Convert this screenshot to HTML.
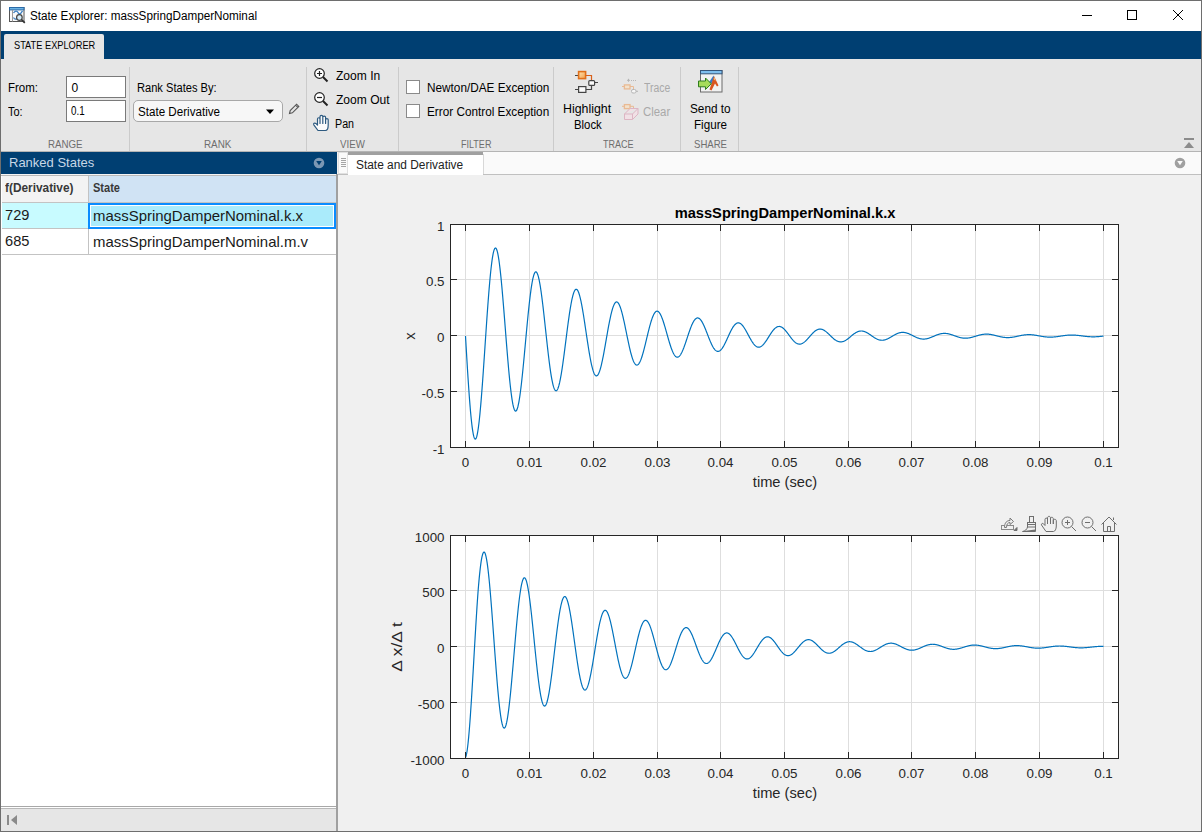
<!DOCTYPE html><html><head><meta charset="utf-8"><style>
html,body{margin:0;padding:0;width:1202px;height:832px;overflow:hidden;background:#f0f0f0;}
body{position:relative;font-family:"Liberation Sans",sans-serif;}
div{position:absolute;}
.t{white-space:nowrap;transform-origin:0 0;}
</style></head><body>
<div style="left:0px;top:0px;width:1202px;height:832px;background:#f0f0f0;"></div>
<div style="left:0px;top:0px;width:1202px;height:31px;background:#fff;"></div>
<div style="left:0px;top:31px;width:1202px;height:28px;background:#003f72;"></div>
<div style="left:4px;top:34px;width:100px;height:25px;background:#e6e6e6;border-radius:2px 2px 0 0;"></div>
<div class="t" style="left:14.1px;top:40.09px;font-size:11px;line-height:11px;color:#000;transform:scaleX(0.8400);">STATE EXPLORER</div>
<div style="left:0px;top:59px;width:1202px;height:92px;background:#e6e6e6;"></div>
<div style="left:0px;top:151px;width:1202px;height:1px;background:#b4b4b4;"></div>
<div style="left:129px;top:67px;width:1px;height:84px;background:#cbcbcb;"></div>
<div style="left:306px;top:67px;width:1px;height:84px;background:#cbcbcb;"></div>
<div style="left:398px;top:67px;width:1px;height:84px;background:#cbcbcb;"></div>
<div style="left:553px;top:67px;width:1px;height:84px;background:#cbcbcb;"></div>
<div style="left:680px;top:67px;width:1px;height:84px;background:#cbcbcb;"></div>
<div style="left:738px;top:67px;width:1px;height:84px;background:#cbcbcb;"></div>
<div class="t" style="left:30.0px;top:10.24px;font-size:12px;line-height:12px;color:#000;transform:scaleX(0.9752);">State Explorer: massSpringDamperNominal</div>
<div class="t" style="left:7.64px;top:81.88px;font-size:12px;line-height:12px;color:#000;transform:scaleX(0.9578);">From:</div>
<div class="t" style="left:7.64px;top:105.66px;font-size:12px;line-height:12px;color:#000;transform:scaleX(0.9151);">To:</div>
<div style="left:66px;top:76px;width:60px;height:22px;background:#fff;border:1px solid #7a7a7a;box-sizing:border-box;"></div>
<div style="left:66px;top:100px;width:60px;height:22px;background:#fff;border:1px solid #7a7a7a;box-sizing:border-box;"></div>
<div class="t" style="left:71.5px;top:82.04px;font-size:12px;line-height:12px;color:#000;">0</div>
<div class="t" style="left:71.1px;top:105.44px;font-size:12px;line-height:12px;color:#000;transform:scaleX(0.8154);">0.1</div>
<div class="t" style="left:48.0px;top:139.43px;font-size:11px;line-height:11px;color:#6e6e6e;transform:scaleX(0.8846);">RANGE</div>
<div class="t" style="left:137.0px;top:82.46px;font-size:12px;line-height:12px;color:#000;transform:scaleX(0.9252);">Rank States By:</div>
<div style="left:133px;top:100px;width:150px;height:22px;background:#f7f7f7;border:1px solid #a8a8a8;box-sizing:border-box;border-radius:5px;"></div>
<div class="t" style="left:138.1px;top:105.54px;font-size:12px;line-height:12px;color:#000;transform:scaleX(0.9681);">State Derivative</div>
<svg style="position:absolute;left:265px;top:108px" width="10" height="7"><path d="M1 1.5 L9 1.5 L5 6 Z" fill="#000"/></svg>
<svg style="position:absolute;left:287px;top:102px" width="14" height="14"><path d="M2.5 11.5 L3.2 8.6 L9.6 2.2 L11.8 4.4 L5.4 10.8 Z M8.6 3.2 L10.8 5.4" fill="none" stroke="#555" stroke-width="1.1"/></svg>
<div class="t" style="left:204.35999999999999px;top:139.19px;font-size:11px;line-height:11px;color:#6e6e6e;transform:scaleX(0.8966);">RANK</div>
<svg style="position:absolute;left:313px;top:67px" width="16" height="16"><circle cx="6.5" cy="6.5" r="4.8" fill="#fff" stroke="#222" stroke-width="1.2"/><path d="M4 6.5 H9 M6.5 4 V9" stroke="#222" stroke-width="1.2"/><path d="M10 10 L14.5 14.5" stroke="#222" stroke-width="2"/></svg>
<svg style="position:absolute;left:313px;top:91px" width="16" height="16"><circle cx="6.5" cy="6.5" r="4.8" fill="#fff" stroke="#222" stroke-width="1.2"/><path d="M4 6.5 H9" stroke="#222" stroke-width="1.2"/><path d="M10 10 L14.5 14.5" stroke="#222" stroke-width="2"/></svg>
<svg style="position:absolute;left:312px;top:114px" width="18" height="18"><path d="M6 16.5 L1.8 10.8 C1.1 9.6 2.6 8.5 3.8 9.4 L5.5 11 V5 C5.5 3.3 8 3.3 8 5 V9.5 V2.8 C8 1 10.8 1 10.8 2.8 V9.5 V3.3 C10.8 1.6 13.6 1.6 13.6 3.3 V9.5 V5.8 C13.6 4.2 16.2 4.2 16.2 5.8 V11 C16.2 14 15 16.5 13.5 16.5 Z" fill="#fbfbfb" stroke="#2d5a80" stroke-width="1.2" stroke-linejoin="round"/></svg>
<div class="t" style="left:335.54px;top:69.90px;font-size:12px;line-height:12px;color:#000;transform:scaleX(1.0042);">Zoom In</div>
<div class="t" style="left:335.54px;top:93.74px;font-size:12px;line-height:12px;color:#000;transform:scaleX(1.0047);">Zoom Out</div>
<div class="t" style="left:335.1px;top:118.34px;font-size:12px;line-height:12px;color:#000;transform:scaleX(0.8905);">Pan</div>
<div class="t" style="left:340.0px;top:139.09px;font-size:11px;line-height:11px;color:#6e6e6e;transform:scaleX(0.8822);">VIEW</div>
<div style="left:406px;top:80px;width:14px;height:14px;background:#fff;border:1px solid #8a8a8a;box-sizing:border-box;"></div>
<div style="left:406px;top:104px;width:14px;height:14px;background:#fff;border:1px solid #8a8a8a;box-sizing:border-box;"></div>
<div class="t" style="left:427.28000000000003px;top:82.00px;font-size:12px;line-height:12px;color:#000;transform:scaleX(0.9813);">Newton/DAE Exception</div>
<div class="t" style="left:427.28000000000003px;top:105.64px;font-size:12px;line-height:12px;color:#000;transform:scaleX(0.9798);">Error Control Exception</div>
<div class="t" style="left:461.35999999999996px;top:139.09px;font-size:11px;line-height:11px;color:#6e6e6e;transform:scaleX(0.8199);">FILTER</div>
<svg style="position:absolute;left:570px;top:66px" width="32" height="32">
<defs><linearGradient id="og" x1="0" y1="0" x2="1" y2="1"><stop offset="0" stop-color="#fde3b0"/><stop offset="1" stop-color="#f4a04a"/></linearGradient></defs>
<path d="M5 9.5 H8.5 M5 23.5 H8.5 M24.6 16.5 H28" stroke="#444" stroke-width="1.2"/>
<rect x="8.6" y="5.6" width="7" height="7" fill="url(#og)" stroke="#e0701a" stroke-width="1.6"/>
<path d="M15.6 9.5 H21.5 V14.5" stroke="#d8601a" stroke-width="1.2" fill="none"/>
<path d="M21.5 19.3 V23.5 H15.8" stroke="#444" stroke-width="1.2" fill="none"/>
<rect x="18.8" y="14.6" width="5.8" height="4.8" rx="1" fill="#fafafa" stroke="#444" stroke-width="1.2"/>
<rect x="8.6" y="20.6" width="7.3" height="5.8" fill="#fafafa" stroke="#444" stroke-width="1.2"/>
</svg>
<div class="t" style="left:563.0px;top:103.22px;font-size:12px;line-height:12px;color:#000;transform:scaleX(1.0323);">Highlight</div>
<div class="t" style="left:573.54px;top:119.16px;font-size:12px;line-height:12px;color:#000;transform:scaleX(0.9474);">Block</div>
<svg style="position:absolute;left:618px;top:74px" width="24" height="48" opacity="0.8">
<path d="M10.5 4.8 V7.8 M9 6.3 H12" stroke="#aaa" stroke-width="1"/>
<path d="M13 6.5 h1 M15 6.5 h1 M17 6.5 h1" stroke="#aaa" stroke-width="1"/>
<path d="M4 12.5 H6.3 M12 12.5 H15.5 V15.5" stroke="#eab080" stroke-width="1" fill="none"/>
<rect x="6.4" y="10.9" width="5.6" height="4" fill="#f6e2c8" stroke="#eab080" stroke-width="1.3"/>
<rect x="13.5" y="15.5" width="4.5" height="3.5" rx="1.5" fill="#fafafa" stroke="#aaa" stroke-width="1"/>
<path d="M18 17.3 H20" stroke="#aaa" stroke-width="1"/>
<path d="M4 32.3 H6.3 M12 32.3 H15.5 V34.5" stroke="#eab080" stroke-width="1" fill="none"/>
<rect x="6.4" y="30.6" width="5.6" height="4" fill="#f6e2c8" stroke="#eab080" stroke-width="1.3"/>
<path d="M6.5 40 L12 34.5 H20 V40 L14.5 45.5 H6.5 Z M6.5 40 H14.5 L20 34.5 M14.5 40 V45.5" fill="#f4e0e6" stroke="#dcaabb" stroke-width="1"/>
</svg>
<div class="t" style="left:644.1px;top:82.48px;font-size:12px;line-height:12px;color:#a9a9a9;transform:scaleX(0.8667);">Trace</div>
<div class="t" style="left:643.3px;top:105.86px;font-size:12px;line-height:12px;color:#a9a9a9;transform:scaleX(0.9502);">Clear</div>
<div class="t" style="left:602.7199999999999px;top:139.09px;font-size:11px;line-height:11px;color:#6e6e6e;transform:scaleX(0.8208);">TRACE</div>
<svg style="position:absolute;left:694px;top:66px" width="32" height="32">
<rect x="6.5" y="4.5" width="21.5" height="21.5" fill="#f2f2f2" stroke="#6b6b6b" stroke-width="1"/>
<rect x="6.5" y="4.5" width="21.5" height="3.3" fill="#7fbfee" stroke="#35557a" stroke-width="1"/>
<path d="M14.5 17 L19.5 9.5 L20.5 12.5 L16.5 19 Z" fill="#3a7cc8"/>
<path d="M15.5 23.5 L20 10 L24.5 19.5 L23 20.5 L21 17.5 L17.5 24.5 Z" fill="#d9561e"/>
<path d="M19.5 13 L20.5 11 L21.5 15 Z" fill="#f8c080"/>
<path d="M4.5 15 H11.5 V12 L17.3 17.8 L11.5 23.5 V20.8 H4.5 Z" fill="#a6dc5a" stroke="#2e7d1e" stroke-width="1"/>
</svg>
<div class="t" style="left:689.7199999999999px;top:103.22px;font-size:12px;line-height:12px;color:#000;transform:scaleX(0.9815);">Send to</div>
<div class="t" style="left:693.7199999999999px;top:119.16px;font-size:12px;line-height:12px;color:#000;transform:scaleX(0.9704);">Figure</div>
<div class="t" style="left:693.7199999999999px;top:139.09px;font-size:11px;line-height:11px;color:#6e6e6e;transform:scaleX(0.8709);">SHARE</div>
<div style="left:1184px;top:138px;width:10px;height:2px;background:#8c8c8c;"></div>
<svg style="position:absolute;left:1183px;top:141px" width="12" height="8"><path d="M1 7 L6 1 L11 7 Z" fill="#8c8c8c"/></svg>
<div style="left:1px;top:152px;width:336px;height:22px;background:#003f72;"></div>
<div class="t" style="left:8.92px;top:155.78px;font-size:13px;line-height:13px;color:#c7d7e6;transform:scaleX(0.9992);">Ranked States</div>
<svg style="position:absolute;left:313px;top:157px" width="12" height="12"><circle cx="6" cy="6" r="5.3" fill="#7b97b3"/><path d="M3.2 4 H8.8 L6 8.3 Z" fill="#003f72"/></svg>
<div style="left:1px;top:174px;width:336px;height:658px;background:#fff;"></div>
<div style="left:1px;top:174px;width:336px;height:1px;background:#f4f4f4;"></div>
<div style="left:1px;top:175px;width:336px;height:1px;background:#b9b9b9;"></div>
<div style="left:2px;top:176px;width:86px;height:26px;background:#f3f3f3;"></div>
<div style="left:89px;top:176px;width:247px;height:26px;background:#d0e3f4;"></div>
<div style="left:88px;top:176px;width:1px;height:79px;background:#c3c3c3;"></div>
<div style="left:2px;top:202px;width:334px;height:1px;background:#c3c3c3;"></div>
<div style="left:2px;top:203px;width:86px;height:25px;background:#c8fbff;"></div>
<div style="left:88px;top:203px;width:248px;height:26px;background:#0a8cff;"></div>
<div style="left:90px;top:205px;width:244px;height:22px;background:#fff;"></div>
<div style="left:91px;top:206px;width:242px;height:20px;background:#aaebfb;"></div>
<div style="left:2px;top:228px;width:86px;height:1px;background:#c3c3c3;"></div>
<div style="left:2px;top:254px;width:334px;height:1px;background:#c3c3c3;"></div>
<div class="t" style="left:5.45px;top:182.30px;font-size:12px;line-height:12px;color:#383838;font-weight:bold;transform:scaleX(0.9876);">f(Derivative)</div>
<div class="t" style="left:93.27999999999999px;top:182.30px;font-size:12px;line-height:12px;color:#383838;font-weight:bold;transform:scaleX(0.9201);">State</div>
<div class="t" style="left:5.1px;top:207.67px;font-size:14.5px;line-height:14.5px;color:#1a1a1a;transform:scaleX(1.0086);">729</div>
<div class="t" style="left:92.53999999999999px;top:208.71px;font-size:14.5px;line-height:14.5px;color:#1a1a1a;transform:scaleX(1.0301);">massSpringDamperNominal.k.x</div>
<div class="t" style="left:5.1px;top:233.81px;font-size:14.5px;line-height:14.5px;color:#1a1a1a;transform:scaleX(1.0086);">685</div>
<div class="t" style="left:92.53999999999999px;top:234.61px;font-size:14.5px;line-height:14.5px;color:#1a1a1a;transform:scaleX(1.0302);">massSpringDamperNominal.m.v</div>
<div style="left:336px;top:174px;width:2px;height:657px;background:#a0a0a0;"></div>
<div style="left:1px;top:806px;width:335px;height:1px;background:#a8a8a8;"></div>
<div style="left:1px;top:808px;width:335px;height:1px;background:#b9b9b9;"></div>
<div style="left:1px;top:809px;width:335px;height:22px;background:#e6e6e6;"></div>
<div style="left:7px;top:815px;width:2px;height:10px;background:#8a8a8a;"></div>
<svg style="position:absolute;left:10px;top:814px" width="8" height="12"><path d="M7 1 L1 6 L7 11 Z" fill="#8a8a8a"/></svg>
<div style="left:338px;top:152px;width:863px;height:22px;background:#fafafa;"></div>
<div style="left:338px;top:174px;width:863px;height:1px;background:#c0c0c0;"></div>
<div style="left:338px;top:175px;width:863px;height:656px;background:#f0f0f0;"></div>
<div style="left:338px;top:152px;width:10px;height:22px;background:#fafafa;border:1px solid #e0e0e0;box-sizing:border-box;"></div>
<div style="left:341px;top:158px;width:5px;height:1px;background:#a5a5a5;"></div>
<div style="left:341px;top:160px;width:5px;height:1px;background:#a5a5a5;"></div>
<div style="left:341px;top:162px;width:5px;height:1px;background:#a5a5a5;"></div>
<div style="left:341px;top:164px;width:5px;height:1px;background:#a5a5a5;"></div>
<div style="left:341px;top:166px;width:5px;height:1px;background:#a5a5a5;"></div>
<div style="left:348px;top:152px;width:135px;height:23px;background:#fff;"></div>
<div style="left:348px;top:152px;width:135px;height:3px;background:#a0a0a0;"></div>
<div style="left:483px;top:154px;width:1px;height:20px;background:#d8d8d8;"></div>
<div class="t" style="left:356.1px;top:159.02px;font-size:12px;line-height:12px;color:#222;transform:scaleX(0.9920);">State and Derivative</div>
<svg style="position:absolute;left:1174px;top:157px" width="12" height="12"><circle cx="6" cy="6" r="5.3" fill="#a0a0a0"/><path d="M3.2 4 H8.8 L6 8.3 Z" fill="#fafafa"/></svg>
<div style="left:1082px;top:15px;width:10px;height:1px;background:#000;"></div>
<div style="left:1127px;top:10px;width:10px;height:10px;border:1px solid #000;box-sizing:border-box;"></div>
<svg style="position:absolute;left:1172px;top:9px" width="12" height="12"><path d="M1 1 L11 11 M11 1 L1 11" stroke="#000" stroke-width="1"/></svg>
<svg style="position:absolute;left:6px;top:4px" width="22" height="22">
<rect x="3.5" y="3.5" width="14.5" height="14" fill="#fafafa" stroke="#555" stroke-width="1"/>
<rect x="3.5" y="3.5" width="14.5" height="2.4" fill="#6cb4e4" stroke="#2a6aa8" stroke-width="1"/>
<path d="M6.5 6 V17.5" stroke="#999" stroke-width="1"/>
<path d="M7.5 9 C9 6.5 11 6.5 12 8.5 S14 11 16.5 6.8" stroke="#3c7fc0" fill="none" stroke-width="1.3"/>
<path d="M7.5 13.5 C8.5 15.5 10 15.5 11 14.5" stroke="#3c7fc0" fill="none" stroke-width="1.3"/>
<circle cx="13.4" cy="13.5" r="2.8" fill="#d6ecf8" stroke="#444" stroke-width="1.2"/>
<path d="M15.5 15.6 L18.8 18.8" stroke="#333" stroke-width="1.7"/>
</svg>
<div style="left:0px;top:0px;width:1202px;height:832px;border:1px solid #6e6e6e;box-sizing:border-box;background:transparent;"></div>
<svg style="position:absolute;left:0;top:0" width="1202" height="832" font-family="'Liberation Sans', sans-serif"><rect x="450" y="224" width="669" height="224" fill="#fff"/><line x1="465.5" y1="225" x2="465.5" y2="447" stroke="#dedede" stroke-width="1"/><line x1="529.5" y1="225" x2="529.5" y2="447" stroke="#dedede" stroke-width="1"/><line x1="593.5" y1="225" x2="593.5" y2="447" stroke="#dedede" stroke-width="1"/><line x1="657.5" y1="225" x2="657.5" y2="447" stroke="#dedede" stroke-width="1"/><line x1="720.5" y1="225" x2="720.5" y2="447" stroke="#dedede" stroke-width="1"/><line x1="784.5" y1="225" x2="784.5" y2="447" stroke="#dedede" stroke-width="1"/><line x1="848.5" y1="225" x2="848.5" y2="447" stroke="#dedede" stroke-width="1"/><line x1="911.5" y1="225" x2="911.5" y2="447" stroke="#dedede" stroke-width="1"/><line x1="975.5" y1="225" x2="975.5" y2="447" stroke="#dedede" stroke-width="1"/><line x1="1039.5" y1="225" x2="1039.5" y2="447" stroke="#dedede" stroke-width="1"/><line x1="1103.5" y1="225" x2="1103.5" y2="447" stroke="#dedede" stroke-width="1"/><line x1="451" y1="224.5" x2="1118" y2="224.5" stroke="#dedede" stroke-width="1"/><line x1="451" y1="279.5" x2="1118" y2="279.5" stroke="#dedede" stroke-width="1"/><line x1="451" y1="335.5" x2="1118" y2="335.5" stroke="#dedede" stroke-width="1"/><line x1="451" y1="391.5" x2="1118" y2="391.5" stroke="#dedede" stroke-width="1"/><line x1="451" y1="447.5" x2="1118" y2="447.5" stroke="#dedede" stroke-width="1"/><path d="M465.50 336.00 L465.82 341.52 L466.14 346.99 L466.46 352.41 L466.78 357.76 L467.10 363.03 L467.41 368.21 L467.73 373.29 L468.05 378.24 L468.37 383.07 L468.69 387.76 L469.01 392.30 L469.33 396.68 L469.65 400.88 L469.97 404.91 L470.29 408.74 L470.60 412.38 L470.92 415.81 L471.24 419.03 L471.56 422.03 L471.88 424.80 L472.20 427.34 L472.52 429.64 L472.84 431.70 L473.16 433.51 L473.48 435.08 L473.79 436.39 L474.11 437.45 L474.43 438.25 L474.75 438.80 L475.07 439.09 L475.39 439.13 L475.71 438.91 L476.03 438.44 L476.35 437.73 L476.67 436.76 L476.98 435.55 L477.30 434.10 L477.62 432.42 L477.94 430.51 L478.26 428.37 L478.58 426.02 L478.90 423.46 L479.22 420.70 L479.54 417.74 L479.86 414.60 L480.17 411.27 L480.49 407.78 L480.81 404.13 L481.13 400.33 L481.45 396.39 L481.77 392.32 L482.09 388.13 L482.41 383.84 L482.73 379.45 L483.05 374.97 L483.36 370.42 L483.68 365.81 L484.00 361.14 L484.32 356.44 L484.64 351.71 L484.96 346.97 L485.28 342.22 L485.60 337.49 L485.92 332.77 L486.24 328.08 L486.55 323.44 L486.87 318.85 L487.19 314.32 L487.51 309.87 L487.83 305.51 L488.15 301.24 L488.47 297.08 L488.79 293.04 L489.11 289.13 L489.43 285.34 L489.74 281.71 L490.06 278.22 L490.38 274.89 L490.70 271.73 L491.02 268.75 L491.34 265.95 L491.66 263.33 L491.98 260.90 L492.30 258.67 L492.62 256.64 L492.93 254.82 L493.25 253.21 L493.57 251.81 L493.89 250.62 L494.21 249.65 L494.53 248.90 L494.85 248.37 L495.17 248.05 L495.49 247.95 L495.81 248.07 L496.12 248.41 L496.44 248.96 L496.76 249.72 L497.08 250.69 L497.40 251.87 L497.72 253.24 L498.04 254.82 L498.36 256.58 L498.68 258.54 L499.00 260.67 L499.31 262.98 L499.63 265.46 L499.95 268.10 L500.27 270.89 L500.59 273.83 L500.91 276.91 L501.23 280.12 L501.55 283.45 L501.87 286.89 L502.19 290.44 L502.50 294.08 L502.82 297.81 L503.14 301.61 L503.46 305.48 L503.78 309.40 L504.10 313.37 L504.42 317.38 L504.74 321.41 L505.06 325.46 L505.38 329.51 L505.69 333.56 L506.01 337.59 L506.33 341.61 L506.65 345.58 L506.97 349.52 L507.29 353.40 L507.61 357.22 L507.93 360.96 L508.25 364.63 L508.56 368.21 L508.88 371.69 L509.20 375.07 L509.52 378.33 L509.84 381.47 L510.16 384.49 L510.48 387.37 L510.80 390.11 L511.12 392.70 L511.44 395.14 L511.75 397.42 L512.07 399.54 L512.39 401.49 L512.71 403.27 L513.03 404.88 L513.35 406.30 L513.67 407.55 L513.99 408.62 L514.31 409.50 L514.63 410.19 L514.95 410.70 L515.26 411.02 L515.58 411.16 L515.90 411.11 L516.22 410.87 L516.54 410.46 L516.86 409.86 L517.18 409.08 L517.50 408.12 L517.82 407.00 L518.13 405.70 L518.45 404.24 L518.77 402.61 L519.09 400.83 L519.41 398.90 L519.73 396.83 L520.05 394.61 L520.37 392.26 L520.69 389.79 L521.01 387.19 L521.33 384.48 L521.64 381.67 L521.96 378.75 L522.28 375.75 L522.60 372.66 L522.92 369.50 L523.24 366.27 L523.56 362.98 L523.88 359.64 L524.20 356.26 L524.51 352.85 L524.83 349.41 L525.15 345.96 L525.47 342.50 L525.79 339.04 L526.11 335.59 L526.43 332.16 L526.75 328.75 L527.07 325.38 L527.39 322.06 L527.71 318.78 L528.02 315.56 L528.34 312.41 L528.66 309.34 L528.98 306.34 L529.30 303.43 L529.62 300.62 L529.94 297.91 L530.26 295.30 L530.58 292.81 L530.89 290.44 L531.21 288.19 L531.53 286.07 L531.85 284.09 L532.17 282.24 L532.49 280.54 L532.81 278.98 L533.13 277.56 L533.45 276.30 L533.77 275.19 L534.09 274.24 L534.40 273.45 L534.72 272.81 L535.04 272.33 L535.36 272.01 L535.68 271.85 L536.00 271.85 L536.32 272.01 L536.64 272.32 L536.96 272.79 L537.27 273.42 L537.59 274.19 L537.91 275.11 L538.23 276.18 L538.55 277.39 L538.87 278.74 L539.19 280.22 L539.51 281.84 L539.83 283.58 L540.15 285.44 L540.47 287.41 L540.78 289.49 L541.10 291.68 L541.42 293.97 L541.74 296.35 L542.06 298.81 L542.38 301.36 L542.70 303.98 L543.02 306.66 L543.34 309.40 L543.65 312.20 L543.97 315.03 L544.29 317.91 L544.61 320.82 L544.93 323.75 L545.25 326.69 L545.57 329.64 L545.89 332.60 L546.21 335.54 L546.53 338.48 L546.85 341.39 L547.16 344.28 L547.48 347.13 L547.80 349.94 L548.12 352.70 L548.44 355.40 L548.76 358.05 L549.08 360.63 L549.40 363.13 L549.72 365.55 L550.03 367.89 L550.35 370.14 L550.67 372.29 L550.99 374.35 L551.31 376.30 L551.63 378.13 L551.95 379.86 L552.27 381.47 L552.59 382.96 L552.91 384.33 L553.23 385.57 L553.54 386.68 L553.86 387.66 L554.18 388.51 L554.50 389.23 L554.82 389.81 L555.14 390.25 L555.46 390.56 L555.78 390.74 L556.10 390.78 L556.41 390.68 L556.73 390.45 L557.05 390.08 L557.37 389.59 L557.69 388.96 L558.01 388.21 L558.33 387.33 L558.65 386.33 L558.97 385.21 L559.29 383.98 L559.61 382.63 L559.92 381.18 L560.24 379.62 L560.56 377.96 L560.88 376.21 L561.20 374.36 L561.52 372.43 L561.84 370.42 L562.16 368.34 L562.48 366.19 L562.80 363.97 L563.11 361.69 L563.43 359.37 L563.75 356.99 L564.07 354.58 L564.39 352.13 L564.71 349.66 L565.03 347.17 L565.35 344.66 L565.67 342.14 L565.99 339.61 L566.30 337.10 L566.62 334.59 L566.94 332.10 L567.26 329.63 L567.58 327.18 L567.90 324.78 L568.22 322.41 L568.54 320.08 L568.86 317.81 L569.17 315.60 L569.49 313.44 L569.81 311.35 L570.13 309.34 L570.45 307.39 L570.77 305.53 L571.09 303.76 L571.41 302.07 L571.73 300.47 L572.05 298.97 L572.37 297.57 L572.68 296.27 L573.00 295.07 L573.32 293.98 L573.64 293.00 L573.96 292.13 L574.28 291.37 L574.60 290.73 L574.92 290.20 L575.24 289.78 L575.56 289.49 L575.87 289.30 L576.19 289.24 L576.51 289.29 L576.83 289.45 L577.15 289.73 L577.47 290.12 L577.79 290.62 L578.11 291.23 L578.43 291.95 L578.75 292.77 L579.06 293.70 L579.38 294.73 L579.70 295.85 L580.02 297.06 L580.34 298.37 L580.66 299.76 L580.98 301.23 L581.30 302.78 L581.62 304.41 L581.94 306.10 L582.25 307.86 L582.57 309.68 L582.89 311.56 L583.21 313.49 L583.53 315.46 L583.85 317.47 L584.17 319.52 L584.49 321.60 L584.81 323.71 L585.12 325.83 L585.44 327.97 L585.76 330.12 L586.08 332.27 L586.40 334.42 L586.72 336.56 L587.04 338.69 L587.36 340.81 L587.68 342.90 L588.00 344.96 L588.32 346.99 L588.63 348.99 L588.95 350.94 L589.27 352.85 L589.59 354.70 L589.91 356.50 L590.23 358.24 L590.55 359.92 L590.87 361.53 L591.19 363.07 L591.50 364.53 L591.82 365.92 L592.14 367.22 L592.46 368.45 L592.78 369.58 L593.10 370.63 L593.42 371.59 L593.74 372.46 L594.06 373.23 L594.38 373.91 L594.69 374.49 L595.01 374.97 L595.33 375.35 L595.65 375.64 L595.97 375.82 L596.29 375.91 L596.61 375.90 L596.93 375.79 L597.25 375.58 L597.57 375.28 L597.88 374.88 L598.20 374.39 L598.52 373.80 L598.84 373.13 L599.16 372.37 L599.48 371.52 L599.80 370.59 L600.12 369.58 L600.44 368.49 L600.76 367.33 L601.08 366.09 L601.39 364.79 L601.71 363.42 L602.03 361.99 L602.35 360.51 L602.67 358.97 L602.99 357.39 L603.31 355.76 L603.63 354.09 L603.95 352.38 L604.26 350.64 L604.58 348.87 L604.90 347.08 L605.22 345.28 L605.54 343.46 L605.86 341.63 L606.18 339.79 L606.50 337.96 L606.82 336.12 L607.14 334.30 L607.46 332.49 L607.77 330.70 L608.09 328.93 L608.41 327.19 L608.73 325.48 L609.05 323.80 L609.37 322.16 L609.69 320.56 L610.01 319.01 L610.33 317.51 L610.64 316.06 L610.96 314.67 L611.28 313.33 L611.60 312.06 L611.92 310.86 L612.24 309.72 L612.56 308.65 L612.88 307.66 L613.20 306.74 L613.52 305.89 L613.84 305.13 L614.15 304.44 L614.47 303.84 L614.79 303.31 L615.11 302.87 L615.43 302.52 L615.75 302.24 L616.07 302.06 L616.39 301.95 L616.71 301.93 L617.02 302.00 L617.34 302.14 L617.66 302.37 L617.98 302.69 L618.30 303.08 L618.62 303.55 L618.94 304.10 L619.26 304.72 L619.58 305.42 L619.90 306.19 L620.22 307.03 L620.53 307.93 L620.85 308.90 L621.17 309.93 L621.49 311.02 L621.81 312.17 L622.13 313.37 L622.45 314.62 L622.77 315.91 L623.09 317.25 L623.40 318.63 L623.72 320.04 L624.04 321.49 L624.36 322.96 L624.68 324.46 L625.00 325.98 L625.32 327.51 L625.64 329.06 L625.96 330.62 L626.28 332.19 L626.60 333.75 L626.91 335.31 L627.23 336.87 L627.55 338.42 L627.87 339.95 L628.19 341.47 L628.51 342.96 L628.83 344.43 L629.15 345.88 L629.47 347.29 L629.79 348.66 L630.10 350.00 L630.42 351.30 L630.74 352.55 L631.06 353.76 L631.38 354.92 L631.70 356.02 L632.02 357.07 L632.34 358.06 L632.66 359.00 L632.98 359.87 L633.29 360.68 L633.61 361.42 L633.93 362.10 L634.25 362.71 L634.57 363.26 L634.89 363.73 L635.21 364.13 L635.53 364.47 L635.85 364.73 L636.16 364.91 L636.48 365.03 L636.80 365.08 L637.12 365.05 L637.44 364.95 L637.76 364.78 L638.08 364.55 L638.40 364.24 L638.72 363.86 L639.04 363.42 L639.36 362.92 L639.67 362.35 L639.99 361.71 L640.31 361.02 L640.63 360.27 L640.95 359.47 L641.27 358.61 L641.59 357.70 L641.91 356.74 L642.23 355.74 L642.55 354.69 L642.86 353.60 L643.18 352.47 L643.50 351.31 L643.82 350.12 L644.14 348.90 L644.46 347.65 L644.78 346.38 L645.10 345.10 L645.42 343.79 L645.74 342.47 L646.05 341.15 L646.37 339.82 L646.69 338.48 L647.01 337.15 L647.33 335.82 L647.65 334.49 L647.97 333.18 L648.29 331.88 L648.61 330.60 L648.92 329.34 L649.24 328.10 L649.56 326.88 L649.88 325.69 L650.20 324.54 L650.52 323.42 L650.84 322.33 L651.16 321.29 L651.48 320.28 L651.80 319.32 L652.12 318.41 L652.43 317.54 L652.75 316.72 L653.07 315.95 L653.39 315.24 L653.71 314.58 L654.03 313.97 L654.35 313.43 L654.67 312.94 L654.99 312.51 L655.31 312.14 L655.62 311.83 L655.94 311.58 L656.26 311.39 L656.58 311.26 L656.90 311.20 L657.22 311.19 L657.54 311.25 L657.86 311.37 L658.18 311.54 L658.50 311.78 L658.81 312.07 L659.13 312.42 L659.45 312.83 L659.77 313.29 L660.09 313.80 L660.41 314.37 L660.73 314.98 L661.05 315.65 L661.37 316.36 L661.69 317.12 L662.00 317.91 L662.32 318.75 L662.64 319.63 L662.96 320.54 L663.28 321.49 L663.60 322.46 L663.92 323.47 L664.24 324.50 L664.56 325.55 L664.88 326.62 L665.19 327.71 L665.51 328.82 L665.83 329.93 L666.15 331.06 L666.47 332.19 L666.79 333.33 L667.11 334.47 L667.43 335.61 L667.75 336.74 L668.07 337.86 L668.38 338.97 L668.70 340.07 L669.02 341.16 L669.34 342.23 L669.66 343.27 L669.98 344.30 L670.30 345.29 L670.62 346.26 L670.94 347.20 L671.25 348.11 L671.57 348.99 L671.89 349.82 L672.21 350.62 L672.53 351.39 L672.85 352.10 L673.17 352.78 L673.49 353.41 L673.81 354.00 L674.13 354.54 L674.45 355.03 L674.76 355.47 L675.08 355.86 L675.40 356.20 L675.72 356.49 L676.04 356.73 L676.36 356.92 L676.68 357.05 L677.00 357.14 L677.32 357.17 L677.63 357.15 L677.95 357.07 L678.27 356.95 L678.59 356.78 L678.91 356.55 L679.23 356.28 L679.55 355.96 L679.87 355.59 L680.19 355.18 L680.51 354.72 L680.83 354.21 L681.14 353.67 L681.46 353.08 L681.78 352.46 L682.10 351.80 L682.42 351.10 L682.74 350.37 L683.06 349.61 L683.38 348.82 L683.70 348.01 L684.01 347.16 L684.33 346.30 L684.65 345.41 L684.97 344.51 L685.29 343.58 L685.61 342.65 L685.93 341.70 L686.25 340.75 L686.57 339.78 L686.89 338.82 L687.21 337.85 L687.52 336.88 L687.84 335.91 L688.16 334.95 L688.48 334.00 L688.80 333.05 L689.12 332.12 L689.44 331.20 L689.76 330.30 L690.08 329.42 L690.39 328.55 L690.71 327.71 L691.03 326.90 L691.35 326.11 L691.67 325.35 L691.99 324.61 L692.31 323.91 L692.63 323.25 L692.95 322.61 L693.27 322.02 L693.59 321.46 L693.90 320.94 L694.22 320.45 L694.54 320.01 L694.86 319.61 L695.18 319.25 L695.50 318.93 L695.82 318.66 L696.14 318.43 L696.46 318.25 L696.78 318.10 L697.09 318.01 L697.41 317.95 L697.73 317.95 L698.05 317.98 L698.37 318.06 L698.69 318.18 L699.01 318.35 L699.33 318.56 L699.65 318.80 L699.97 319.09 L700.28 319.42 L700.60 319.79 L700.92 320.20 L701.24 320.64 L701.56 321.12 L701.88 321.63 L702.20 322.17 L702.52 322.75 L702.84 323.35 L703.15 323.98 L703.47 324.64 L703.79 325.32 L704.11 326.03 L704.43 326.75 L704.75 327.49 L705.07 328.26 L705.39 329.03 L705.71 329.82 L706.03 330.62 L706.35 331.43 L706.66 332.25 L706.98 333.07 L707.30 333.89 L707.62 334.72 L707.94 335.55 L708.26 336.37 L708.58 337.18 L708.90 337.99 L709.22 338.79 L709.53 339.58 L709.85 340.36 L710.17 341.12 L710.49 341.87 L710.81 342.60 L711.13 343.31 L711.45 343.99 L711.77 344.66 L712.09 345.30 L712.41 345.91 L712.73 346.50 L713.04 347.06 L713.36 347.59 L713.68 348.09 L714.00 348.55 L714.32 348.99 L714.64 349.39 L714.96 349.75 L715.28 350.08 L715.60 350.38 L715.91 350.63 L716.23 350.85 L716.55 351.04 L716.87 351.18 L717.19 351.29 L717.51 351.36 L717.83 351.40 L718.15 351.39 L718.47 351.35 L718.79 351.27 L719.11 351.16 L719.42 351.00 L719.74 350.82 L720.06 350.59 L720.38 350.34 L720.70 350.05 L721.02 349.72 L721.34 349.37 L721.66 348.98 L721.98 348.57 L722.30 348.13 L722.61 347.66 L722.93 347.16 L723.25 346.64 L723.57 346.09 L723.89 345.53 L724.21 344.94 L724.53 344.34 L724.85 343.71 L725.17 343.08 L725.49 342.42 L725.80 341.76 L726.12 341.08 L726.44 340.40 L726.76 339.71 L727.08 339.01 L727.40 338.31 L727.72 337.61 L728.04 336.91 L728.36 336.21 L728.67 335.51 L728.99 334.81 L729.31 334.13 L729.63 333.45 L729.95 332.78 L730.27 332.12 L730.59 331.47 L730.91 330.84 L731.23 330.22 L731.55 329.63 L731.87 329.05 L732.18 328.48 L732.50 327.94 L732.82 327.43 L733.14 326.93 L733.46 326.46 L733.78 326.02 L734.10 325.60 L734.42 325.21 L734.74 324.85 L735.06 324.51 L735.37 324.21 L735.69 323.94 L736.01 323.69 L736.33 323.48 L736.65 323.30 L736.97 323.15 L737.29 323.03 L737.61 322.95 L737.93 322.89 L738.25 322.87 L738.56 322.88 L738.88 322.92 L739.20 323.00 L739.52 323.10 L739.84 323.24 L740.16 323.40 L740.48 323.60 L740.80 323.82 L741.12 324.08 L741.43 324.36 L741.75 324.66 L742.07 325.00 L742.39 325.35 L742.71 325.73 L743.03 326.14 L743.35 326.57 L743.67 327.01 L743.99 327.48 L744.31 327.96 L744.62 328.47 L744.94 328.98 L745.26 329.52 L745.58 330.06 L745.90 330.62 L746.22 331.18 L746.54 331.76 L746.86 332.34 L747.18 332.93 L747.50 333.52 L747.82 334.12 L748.13 334.72 L748.45 335.32 L748.77 335.91 L749.09 336.51 L749.41 337.10 L749.73 337.68 L750.05 338.26 L750.37 338.83 L750.69 339.39 L751.01 339.93 L751.32 340.47 L751.64 340.99 L751.96 341.50 L752.28 341.99 L752.60 342.47 L752.92 342.92 L753.24 343.36 L753.56 343.78 L753.88 344.18 L754.20 344.55 L754.51 344.90 L754.83 345.23 L755.15 345.54 L755.47 345.82 L755.79 346.08 L756.11 346.31 L756.43 346.51 L756.75 346.69 L757.07 346.84 L757.38 346.96 L757.70 347.06 L758.02 347.13 L758.34 347.17 L758.66 347.19 L758.98 347.18 L759.30 347.14 L759.62 347.08 L759.94 346.98 L760.26 346.87 L760.58 346.72 L760.89 346.56 L761.21 346.36 L761.53 346.15 L761.85 345.91 L762.17 345.64 L762.49 345.36 L762.81 345.05 L763.13 344.73 L763.45 344.38 L763.76 344.02 L764.08 343.64 L764.40 343.24 L764.72 342.82 L765.04 342.40 L765.36 341.96 L765.68 341.50 L766.00 341.04 L766.32 340.56 L766.64 340.08 L766.95 339.59 L767.27 339.10 L767.59 338.59 L767.91 338.09 L768.23 337.58 L768.55 337.07 L768.87 336.57 L769.19 336.06 L769.51 335.55 L769.83 335.05 L770.14 334.56 L770.46 334.06 L770.78 333.58 L771.10 333.11 L771.42 332.64 L771.74 332.18 L772.06 331.74 L772.38 331.31 L772.70 330.89 L773.02 330.49 L773.34 330.10 L773.65 329.73 L773.97 329.37 L774.29 329.03 L774.61 328.71 L774.93 328.41 L775.25 328.13 L775.57 327.87 L775.89 327.63 L776.21 327.42 L776.53 327.22 L776.84 327.05 L777.16 326.89 L777.48 326.77 L777.80 326.66 L778.12 326.58 L778.44 326.52 L778.76 326.48 L779.08 326.47 L779.40 326.47 L779.72 326.51 L780.03 326.56 L780.35 326.64 L780.67 326.74 L780.99 326.86 L781.31 327.00 L781.63 327.16 L781.95 327.35 L782.27 327.55 L782.59 327.77 L782.90 328.01 L783.22 328.27 L783.54 328.55 L783.86 328.84 L784.18 329.15 L784.50 329.47 L784.82 329.81 L785.14 330.16 L785.46 330.52 L785.78 330.90 L786.10 331.28 L786.41 331.68 L786.73 332.08 L787.05 332.49 L787.37 332.90 L787.69 333.32 L788.01 333.75 L788.33 334.18 L788.65 334.61 L788.97 335.04 L789.29 335.48 L789.60 335.91 L789.92 336.34 L790.24 336.76 L790.56 337.19 L790.88 337.60 L791.20 338.01 L791.52 338.42 L791.84 338.82 L792.16 339.20 L792.48 339.58 L792.79 339.95 L793.11 340.31 L793.43 340.65 L793.75 340.99 L794.07 341.30 L794.39 341.61 L794.71 341.90 L795.03 342.17 L795.35 342.43 L795.66 342.67 L795.98 342.89 L796.30 343.10 L796.62 343.28 L796.94 343.45 L797.26 343.61 L797.58 343.74 L797.90 343.85 L798.22 343.94 L798.54 344.02 L798.86 344.07 L799.17 344.11 L799.49 344.12 L799.81 344.12 L800.13 344.09 L800.45 344.05 L800.77 343.99 L801.09 343.91 L801.41 343.81 L801.73 343.69 L802.05 343.56 L802.36 343.40 L802.68 343.23 L803.00 343.05 L803.32 342.85 L803.64 342.63 L803.96 342.40 L804.28 342.15 L804.60 341.89 L804.92 341.62 L805.24 341.33 L805.55 341.04 L805.87 340.73 L806.19 340.42 L806.51 340.09 L806.83 339.76 L807.15 339.42 L807.47 339.07 L807.79 338.72 L808.11 338.36 L808.42 338.00 L808.74 337.64 L809.06 337.27 L809.38 336.90 L809.70 336.54 L810.02 336.17 L810.34 335.80 L810.66 335.44 L810.98 335.08 L811.30 334.73 L811.62 334.37 L811.93 334.03 L812.25 333.69 L812.57 333.36 L812.89 333.03 L813.21 332.72 L813.53 332.41 L813.85 332.12 L814.17 331.83 L814.49 331.56 L814.81 331.30 L815.12 331.05 L815.44 330.81 L815.76 330.59 L816.08 330.38 L816.40 330.19 L816.72 330.01 L817.04 329.84 L817.36 329.69 L817.68 329.56 L818.00 329.44 L818.31 329.34 L818.63 329.26 L818.95 329.19 L819.27 329.14 L819.59 329.11 L819.91 329.09 L820.23 329.09 L820.55 329.10 L820.87 329.13 L821.18 329.18 L821.50 329.24 L821.82 329.32 L822.14 329.42 L822.46 329.53 L822.78 329.65 L823.10 329.79 L823.42 329.94 L823.74 330.11 L824.06 330.29 L824.38 330.48 L824.69 330.69 L825.01 330.90 L825.33 331.13 L825.65 331.37 L825.97 331.62 L826.29 331.87 L826.61 332.14 L826.93 332.41 L827.25 332.69 L827.57 332.98 L827.88 333.27 L828.20 333.57 L828.52 333.87 L828.84 334.18 L829.16 334.48 L829.48 334.79 L829.80 335.11 L830.12 335.42 L830.44 335.73 L830.75 336.04 L831.07 336.35 L831.39 336.66 L831.71 336.96 L832.03 337.26 L832.35 337.56 L832.67 337.85 L832.99 338.13 L833.31 338.41 L833.63 338.68 L833.94 338.94 L834.26 339.20 L834.58 339.44 L834.90 339.68 L835.22 339.91 L835.54 340.12 L835.86 340.33 L836.18 340.52 L836.50 340.70 L836.82 340.88 L837.13 341.03 L837.45 341.18 L837.77 341.31 L838.09 341.43 L838.41 341.54 L838.73 341.63 L839.05 341.70 L839.37 341.77 L839.69 341.82 L840.01 341.86 L840.33 341.88 L840.64 341.89 L840.96 341.88 L841.28 341.86 L841.60 341.83 L841.92 341.78 L842.24 341.72 L842.56 341.64 L842.88 341.56 L843.20 341.46 L843.52 341.35 L843.83 341.22 L844.15 341.09 L844.47 340.94 L844.79 340.78 L845.11 340.61 L845.43 340.43 L845.75 340.25 L846.07 340.05 L846.39 339.84 L846.71 339.63 L847.02 339.41 L847.34 339.18 L847.66 338.94 L847.98 338.70 L848.30 338.46 L848.62 338.21 L848.94 337.95 L849.26 337.70 L849.58 337.44 L849.89 337.17 L850.21 336.91 L850.53 336.65 L850.85 336.38 L851.17 336.12 L851.49 335.85 L851.81 335.59 L852.13 335.33 L852.45 335.08 L852.77 334.82 L853.09 334.57 L853.40 334.33 L853.72 334.09 L854.04 333.86 L854.36 333.63 L854.68 333.41 L855.00 333.20 L855.32 332.99 L855.64 332.79 L855.96 332.60 L856.28 332.42 L856.59 332.25 L856.91 332.09 L857.23 331.94 L857.55 331.80 L857.87 331.67 L858.19 331.55 L858.51 331.44 L858.83 331.35 L859.15 331.26 L859.47 331.19 L859.78 331.13 L860.10 331.08 L860.42 331.04 L860.74 331.01 L861.06 331.00 L861.38 330.99 L861.70 331.00 L862.02 331.02 L862.34 331.06 L862.65 331.10 L862.97 331.15 L863.29 331.22 L863.61 331.30 L863.93 331.39 L864.25 331.48 L864.57 331.59 L864.89 331.71 L865.21 331.84 L865.53 331.97 L865.85 332.12 L866.16 332.27 L866.48 332.44 L866.80 332.61 L867.12 332.78 L867.44 332.97 L867.76 333.16 L868.08 333.35 L868.40 333.55 L868.72 333.76 L869.04 333.97 L869.35 334.18 L869.67 334.40 L869.99 334.61 L870.31 334.84 L870.63 335.06 L870.95 335.28 L871.27 335.51 L871.59 335.73 L871.91 335.96 L872.23 336.18 L872.54 336.40 L872.86 336.62 L873.18 336.84 L873.50 337.05 L873.82 337.26 L874.14 337.47 L874.46 337.67 L874.78 337.87 L875.10 338.06 L875.41 338.24 L875.73 338.42 L876.05 338.59 L876.37 338.76 L876.69 338.92 L877.01 339.07 L877.33 339.21 L877.65 339.35 L877.97 339.47 L878.29 339.59 L878.61 339.70 L878.92 339.80 L879.24 339.89 L879.56 339.97 L879.88 340.04 L880.20 340.10 L880.52 340.15 L880.84 340.19 L881.16 340.22 L881.48 340.25 L881.80 340.26 L882.11 340.26 L882.43 340.25 L882.75 340.23 L883.07 340.20 L883.39 340.16 L883.71 340.11 L884.03 340.06 L884.35 339.99 L884.67 339.91 L884.99 339.83 L885.30 339.74 L885.62 339.64 L885.94 339.53 L886.26 339.41 L886.58 339.28 L886.90 339.15 L887.22 339.02 L887.54 338.87 L887.86 338.72 L888.17 338.57 L888.49 338.40 L888.81 338.24 L889.13 338.07 L889.45 337.89 L889.77 337.72 L890.09 337.53 L890.41 337.35 L890.73 337.17 L891.05 336.98 L891.37 336.79 L891.68 336.60 L892.00 336.41 L892.32 336.22 L892.64 336.03 L892.96 335.84 L893.28 335.65 L893.60 335.47 L893.92 335.28 L894.24 335.10 L894.56 334.92 L894.87 334.75 L895.19 334.58 L895.51 334.41 L895.83 334.25 L896.15 334.09 L896.47 333.94 L896.79 333.79 L897.11 333.65 L897.43 333.52 L897.75 333.39 L898.06 333.27 L898.38 333.15 L898.70 333.05 L899.02 332.95 L899.34 332.86 L899.66 332.77 L899.98 332.70 L900.30 332.63 L900.62 332.57 L900.94 332.52 L901.25 332.47 L901.57 332.44 L901.89 332.41 L902.21 332.39 L902.53 332.38 L902.85 332.38 L903.17 332.39 L903.49 332.40 L903.81 332.43 L904.12 332.46 L904.44 332.50 L904.76 332.55 L905.08 332.61 L905.40 332.67 L905.72 332.74 L906.04 332.82 L906.36 332.90 L906.68 332.99 L907.00 333.09 L907.32 333.20 L907.63 333.31 L907.95 333.42 L908.27 333.55 L908.59 333.67 L908.91 333.80 L909.23 333.94 L909.55 334.08 L909.87 334.22 L910.19 334.37 L910.51 334.52 L910.82 334.67 L911.14 334.83 L911.46 334.99 L911.78 335.15 L912.10 335.31 L912.42 335.47 L912.74 335.63 L913.06 335.79 L913.38 335.95 L913.70 336.11 L914.01 336.27 L914.33 336.43 L914.65 336.58 L914.97 336.74 L915.29 336.89 L915.61 337.04 L915.93 337.18 L916.25 337.32 L916.57 337.46 L916.88 337.59 L917.20 337.72 L917.52 337.85 L917.84 337.97 L918.16 338.08 L918.48 338.19 L918.80 338.30 L919.12 338.40 L919.44 338.49 L919.76 338.57 L920.08 338.65 L920.39 338.73 L920.71 338.79 L921.03 338.85 L921.35 338.90 L921.67 338.95 L921.99 338.99 L922.31 339.02 L922.63 339.04 L922.95 339.06 L923.27 339.07 L923.58 339.07 L923.90 339.07 L924.22 339.06 L924.54 339.04 L924.86 339.01 L925.18 338.98 L925.50 338.94 L925.82 338.90 L926.14 338.85 L926.46 338.79 L926.77 338.72 L927.09 338.65 L927.41 338.58 L927.73 338.50 L928.05 338.41 L928.37 338.32 L928.69 338.22 L929.01 338.12 L929.33 338.01 L929.64 337.90 L929.96 337.79 L930.28 337.67 L930.60 337.55 L930.92 337.43 L931.24 337.30 L931.56 337.17 L931.88 337.04 L932.20 336.91 L932.52 336.78 L932.84 336.64 L933.15 336.50 L933.47 336.37 L933.79 336.23 L934.11 336.10 L934.43 335.96 L934.75 335.82 L935.07 335.69 L935.39 335.56 L935.71 335.43 L936.03 335.30 L936.34 335.17 L936.66 335.05 L936.98 334.93 L937.30 334.81 L937.62 334.69 L937.94 334.58 L938.26 334.48 L938.58 334.37 L938.90 334.27 L939.22 334.18 L939.53 334.09 L939.85 334.00 L940.17 333.92 L940.49 333.85 L940.81 333.78 L941.13 333.71 L941.45 333.66 L941.77 333.60 L942.09 333.55 L942.40 333.51 L942.72 333.48 L943.04 333.45 L943.36 333.43 L943.68 333.41 L944.00 333.40 L944.32 333.39 L944.64 333.39 L944.96 333.40 L945.28 333.41 L945.60 333.43 L945.91 333.45 L946.23 333.48 L946.55 333.52 L946.87 333.56 L947.19 333.61 L947.51 333.66 L947.83 333.71 L948.15 333.78 L948.47 333.84 L948.78 333.91 L949.10 333.99 L949.42 334.07 L949.74 334.15 L950.06 334.24 L950.38 334.33 L950.70 334.43 L951.02 334.52 L951.34 334.62 L951.66 334.73 L951.97 334.83 L952.29 334.94 L952.61 335.05 L952.93 335.16 L953.25 335.27 L953.57 335.39 L953.89 335.50 L954.21 335.62 L954.53 335.73 L954.85 335.85 L955.16 335.96 L955.48 336.08 L955.80 336.19 L956.12 336.30 L956.44 336.41 L956.76 336.52 L957.08 336.63 L957.40 336.74 L957.72 336.84 L958.04 336.95 L958.36 337.04 L958.67 337.14 L958.99 337.23 L959.31 337.32 L959.63 337.41 L959.95 337.49 L960.27 337.57 L960.59 337.65 L960.91 337.72 L961.23 337.78 L961.55 337.84 L961.86 337.90 L962.18 337.95 L962.50 338.00 L962.82 338.05 L963.14 338.08 L963.46 338.12 L963.78 338.15 L964.10 338.17 L964.42 338.19 L964.74 338.20 L965.05 338.21 L965.37 338.21 L965.69 338.21 L966.01 338.21 L966.33 338.19 L966.65 338.18 L966.97 338.16 L967.29 338.13 L967.61 338.10 L967.92 338.06 L968.24 338.02 L968.56 337.98 L968.88 337.93 L969.20 337.88 L969.52 337.82 L969.84 337.76 L970.16 337.69 L970.48 337.62 L970.80 337.55 L971.12 337.48 L971.43 337.40 L971.75 337.32 L972.07 337.24 L972.39 337.15 L972.71 337.07 L973.03 336.98 L973.35 336.88 L973.67 336.79 L973.99 336.70 L974.31 336.60 L974.62 336.51 L974.94 336.41 L975.26 336.31 L975.58 336.22 L975.90 336.12 L976.22 336.02 L976.54 335.92 L976.86 335.83 L977.18 335.73 L977.50 335.64 L977.81 335.55 L978.13 335.45 L978.45 335.36 L978.77 335.28 L979.09 335.19 L979.41 335.11 L979.73 335.03 L980.05 334.95 L980.37 334.87 L980.69 334.80 L981.00 334.73 L981.32 334.66 L981.64 334.60 L981.96 334.54 L982.28 334.49 L982.60 334.43 L982.92 334.39 L983.24 334.34 L983.56 334.30 L983.88 334.26 L984.19 334.23 L984.51 334.20 L984.83 334.18 L985.15 334.16 L985.47 334.14 L985.79 334.13 L986.11 334.13 L986.43 334.12 L986.75 334.12 L987.07 334.13 L987.38 334.14 L987.70 334.15 L988.02 334.17 L988.34 334.19 L988.66 334.22 L988.98 334.25 L989.30 334.28 L989.62 334.32 L989.94 334.36 L990.25 334.41 L990.57 334.46 L990.89 334.51 L991.21 334.56 L991.53 334.62 L991.85 334.68 L992.17 334.74 L992.49 334.81 L992.81 334.87 L993.13 334.94 L993.45 335.02 L993.76 335.09 L994.08 335.16 L994.40 335.24 L994.72 335.32 L995.04 335.40 L995.36 335.48 L995.68 335.56 L996.00 335.64 L996.32 335.72 L996.63 335.81 L996.95 335.89 L997.27 335.97 L997.59 336.05 L997.91 336.13 L998.23 336.21 L998.55 336.29 L998.87 336.37 L999.19 336.45 L999.51 336.52 L999.83 336.60 L1000.14 336.67 L1000.46 336.74 L1000.78 336.81 L1001.10 336.88 L1001.42 336.94 L1001.74 337.00 L1002.06 337.06 L1002.38 337.12 L1002.70 337.17 L1003.01 337.22 L1003.33 337.27 L1003.65 337.32 L1003.97 337.36 L1004.29 337.40 L1004.61 337.43 L1004.93 337.46 L1005.25 337.49 L1005.57 337.52 L1005.89 337.54 L1006.21 337.56 L1006.52 337.57 L1006.84 337.58 L1007.16 337.59 L1007.48 337.59 L1007.80 337.59 L1008.12 337.59 L1008.44 337.58 L1008.76 337.57 L1009.08 337.55 L1009.40 337.54 L1009.71 337.52 L1010.03 337.49 L1010.35 337.46 L1010.67 337.43 L1010.99 337.40 L1011.31 337.36 L1011.63 337.32 L1011.95 337.28 L1012.27 337.24 L1012.59 337.19 L1012.90 337.14 L1013.22 337.09 L1013.54 337.03 L1013.86 336.98 L1014.18 336.92 L1014.50 336.86 L1014.82 336.80 L1015.14 336.73 L1015.46 336.67 L1015.78 336.60 L1016.09 336.54 L1016.41 336.47 L1016.73 336.40 L1017.05 336.33 L1017.37 336.26 L1017.69 336.19 L1018.01 336.13 L1018.33 336.06 L1018.65 335.99 L1018.97 335.92 L1019.28 335.85 L1019.60 335.78 L1019.92 335.72 L1020.24 335.65 L1020.56 335.59 L1020.88 335.52 L1021.20 335.46 L1021.52 335.40 L1021.84 335.34 L1022.16 335.28 L1022.47 335.23 L1022.79 335.18 L1023.11 335.13 L1023.43 335.08 L1023.75 335.03 L1024.07 334.99 L1024.39 334.94 L1024.71 334.90 L1025.03 334.87 L1025.35 334.83 L1025.66 334.80 L1025.98 334.78 L1026.30 334.75 L1026.62 334.73 L1026.94 334.71 L1027.26 334.69 L1027.58 334.68 L1027.90 334.67 L1028.22 334.66 L1028.54 334.65 L1028.85 334.65 L1029.17 334.65 L1029.49 334.66 L1029.81 334.67 L1030.13 334.68 L1030.45 334.69 L1030.77 334.71 L1031.09 334.72 L1031.41 334.75 L1031.72 334.77 L1032.04 334.80 L1032.36 334.83 L1032.68 334.86 L1033.00 334.89 L1033.32 334.93 L1033.64 334.97 L1033.96 335.01 L1034.28 335.05 L1034.60 335.10 L1034.91 335.14 L1035.23 335.19 L1035.55 335.24 L1035.87 335.29 L1036.19 335.34 L1036.51 335.40 L1036.83 335.45 L1037.15 335.51 L1037.47 335.56 L1037.79 335.62 L1038.11 335.68 L1038.42 335.73 L1038.74 335.79 L1039.06 335.85 L1039.38 335.91 L1039.70 335.97 L1040.02 336.03 L1040.34 336.08 L1040.66 336.14 L1040.98 336.20 L1041.30 336.25 L1041.61 336.31 L1041.93 336.36 L1042.25 336.42 L1042.57 336.47 L1042.89 336.52 L1043.21 336.57 L1043.53 336.62 L1043.85 336.66 L1044.17 336.71 L1044.49 336.75 L1044.80 336.79 L1045.12 336.83 L1045.44 336.86 L1045.76 336.90 L1046.08 336.93 L1046.40 336.96 L1046.72 336.99 L1047.04 337.02 L1047.36 337.04 L1047.67 337.06 L1047.99 337.08 L1048.31 337.10 L1048.63 337.11 L1048.95 337.12 L1049.27 337.13 L1049.59 337.13 L1049.91 337.14 L1050.23 337.14 L1050.55 337.14 L1050.87 337.13 L1051.18 337.13 L1051.50 337.12 L1051.82 337.11 L1052.14 337.09 L1052.46 337.08 L1052.78 337.06 L1053.10 337.04 L1053.42 337.02 L1053.74 336.99 L1054.05 336.96 L1054.37 336.94 L1054.69 336.90 L1055.01 336.87 L1055.33 336.84 L1055.65 336.80 L1055.97 336.76 L1056.29 336.73 L1056.61 336.69 L1056.93 336.64 L1057.24 336.60 L1057.56 336.56 L1057.88 336.51 L1058.20 336.47 L1058.52 336.42 L1058.84 336.37 L1059.16 336.32 L1059.48 336.28 L1059.80 336.23 L1060.12 336.18 L1060.43 336.13 L1060.75 336.08 L1061.07 336.03 L1061.39 335.98 L1061.71 335.93 L1062.03 335.88 L1062.35 335.84 L1062.67 335.79 L1062.99 335.74 L1063.31 335.70 L1063.62 335.65 L1063.94 335.61 L1064.26 335.57 L1064.58 335.53 L1064.90 335.48 L1065.22 335.45 L1065.54 335.41 L1065.86 335.37 L1066.18 335.34 L1066.50 335.30 L1066.82 335.27 L1067.13 335.24 L1067.45 335.22 L1067.77 335.19 L1068.09 335.17 L1068.41 335.14 L1068.73 335.12 L1069.05 335.11 L1069.37 335.09 L1069.69 335.08 L1070.01 335.06 L1070.32 335.06 L1070.64 335.05 L1070.96 335.04 L1071.28 335.04 L1071.60 335.04 L1071.92 335.04 L1072.24 335.04 L1072.56 335.05 L1072.88 335.05 L1073.20 335.06 L1073.51 335.07 L1073.83 335.09 L1074.15 335.10 L1074.47 335.12 L1074.79 335.14 L1075.11 335.16 L1075.43 335.18 L1075.75 335.20 L1076.07 335.23 L1076.38 335.25 L1076.70 335.28 L1077.02 335.31 L1077.34 335.34 L1077.66 335.38 L1077.98 335.41 L1078.30 335.44 L1078.62 335.48 L1078.94 335.52 L1079.26 335.55 L1079.58 335.59 L1079.89 335.63 L1080.21 335.67 L1080.53 335.71 L1080.85 335.75 L1081.17 335.79 L1081.49 335.83 L1081.81 335.87 L1082.13 335.92 L1082.45 335.96 L1082.76 336.00 L1083.08 336.04 L1083.40 336.08 L1083.72 336.12 L1084.04 336.16 L1084.36 336.20 L1084.68 336.24 L1085.00 336.28 L1085.32 336.31 L1085.64 336.35 L1085.95 336.39 L1086.27 336.42 L1086.59 336.45 L1086.91 336.48 L1087.23 336.52 L1087.55 336.55 L1087.87 336.57 L1088.19 336.60 L1088.51 336.63 L1088.83 336.65 L1089.14 336.67 L1089.46 336.69 L1089.78 336.71 L1090.10 336.73 L1090.42 336.75 L1090.74 336.76 L1091.06 336.77 L1091.38 336.78 L1091.70 336.79 L1092.02 336.80 L1092.34 336.81 L1092.65 336.81 L1092.97 336.81 L1093.29 336.81 L1093.61 336.81 L1093.93 336.81 L1094.25 336.80 L1094.57 336.80 L1094.89 336.79 L1095.21 336.78 L1095.53 336.77 L1095.84 336.75 L1096.16 336.74 L1096.48 336.72 L1096.80 336.71 L1097.12 336.69 L1097.44 336.67 L1097.76 336.64 L1098.08 336.62 L1098.40 336.60 L1098.72 336.57 L1099.03 336.55 L1099.35 336.52 L1099.67 336.49 L1099.99 336.46 L1100.31 336.43 L1100.63 336.40 L1100.95 336.37 L1101.27 336.33 L1101.59 336.30 L1101.91 336.27 L1102.22 336.23 L1102.54 336.20 L1102.86 336.17 L1103.18 336.13 L1103.50 336.10" fill="none" stroke="#0072bd" stroke-width="1.2" stroke-linejoin="round"/><rect x="450.5" y="224.5" width="668" height="223" fill="none" stroke="#262626" stroke-width="1"/><line x1="465.5" y1="447" x2="465.5" y2="441" stroke="#262626"/><line x1="465.5" y1="225" x2="465.5" y2="231" stroke="#262626"/><text x="465.5" y="466.5" text-anchor="middle" font-size="13.33" fill="#262626">0</text><line x1="529.5" y1="447" x2="529.5" y2="441" stroke="#262626"/><line x1="529.5" y1="225" x2="529.5" y2="231" stroke="#262626"/><text x="529.5" y="466.5" text-anchor="middle" font-size="13.33" fill="#262626">0.01</text><line x1="593.5" y1="447" x2="593.5" y2="441" stroke="#262626"/><line x1="593.5" y1="225" x2="593.5" y2="231" stroke="#262626"/><text x="593.5" y="466.5" text-anchor="middle" font-size="13.33" fill="#262626">0.02</text><line x1="657.5" y1="447" x2="657.5" y2="441" stroke="#262626"/><line x1="657.5" y1="225" x2="657.5" y2="231" stroke="#262626"/><text x="657.5" y="466.5" text-anchor="middle" font-size="13.33" fill="#262626">0.03</text><line x1="720.5" y1="447" x2="720.5" y2="441" stroke="#262626"/><line x1="720.5" y1="225" x2="720.5" y2="231" stroke="#262626"/><text x="720.5" y="466.5" text-anchor="middle" font-size="13.33" fill="#262626">0.04</text><line x1="784.5" y1="447" x2="784.5" y2="441" stroke="#262626"/><line x1="784.5" y1="225" x2="784.5" y2="231" stroke="#262626"/><text x="784.5" y="466.5" text-anchor="middle" font-size="13.33" fill="#262626">0.05</text><line x1="848.5" y1="447" x2="848.5" y2="441" stroke="#262626"/><line x1="848.5" y1="225" x2="848.5" y2="231" stroke="#262626"/><text x="848.5" y="466.5" text-anchor="middle" font-size="13.33" fill="#262626">0.06</text><line x1="911.5" y1="447" x2="911.5" y2="441" stroke="#262626"/><line x1="911.5" y1="225" x2="911.5" y2="231" stroke="#262626"/><text x="911.5" y="466.5" text-anchor="middle" font-size="13.33" fill="#262626">0.07</text><line x1="975.5" y1="447" x2="975.5" y2="441" stroke="#262626"/><line x1="975.5" y1="225" x2="975.5" y2="231" stroke="#262626"/><text x="975.5" y="466.5" text-anchor="middle" font-size="13.33" fill="#262626">0.08</text><line x1="1039.5" y1="447" x2="1039.5" y2="441" stroke="#262626"/><line x1="1039.5" y1="225" x2="1039.5" y2="231" stroke="#262626"/><text x="1039.5" y="466.5" text-anchor="middle" font-size="13.33" fill="#262626">0.09</text><line x1="1103.5" y1="447" x2="1103.5" y2="441" stroke="#262626"/><line x1="1103.5" y1="225" x2="1103.5" y2="231" stroke="#262626"/><text x="1103.5" y="466.5" text-anchor="middle" font-size="13.33" fill="#262626">0.1</text><line x1="451" y1="224.5" x2="457" y2="224.5" stroke="#262626"/><line x1="1118" y1="224.5" x2="1112" y2="224.5" stroke="#262626"/><text x="444.5" y="231.0" text-anchor="end" font-size="13.33" fill="#262626">1</text><line x1="451" y1="279.5" x2="457" y2="279.5" stroke="#262626"/><line x1="1118" y1="279.5" x2="1112" y2="279.5" stroke="#262626"/><text x="444.5" y="286.0" text-anchor="end" font-size="13.33" fill="#262626">0.5</text><line x1="451" y1="335.5" x2="457" y2="335.5" stroke="#262626"/><line x1="1118" y1="335.5" x2="1112" y2="335.5" stroke="#262626"/><text x="444.5" y="342.0" text-anchor="end" font-size="13.33" fill="#262626">0</text><line x1="451" y1="391.5" x2="457" y2="391.5" stroke="#262626"/><line x1="1118" y1="391.5" x2="1112" y2="391.5" stroke="#262626"/><text x="444.5" y="398.0" text-anchor="end" font-size="13.33" fill="#262626">-0.5</text><line x1="451" y1="447.5" x2="457" y2="447.5" stroke="#262626"/><line x1="1118" y1="447.5" x2="1112" y2="447.5" stroke="#262626"/><text x="444.5" y="454.0" text-anchor="end" font-size="13.33" fill="#262626">-1</text><text x="785" y="486.8" text-anchor="middle" font-size="14.67" fill="#262626">time (sec)</text><text x="414.5" y="336.0" text-anchor="middle" font-size="14.67" fill="#262626" transform="rotate(-90 414.5 336.0)" >x</text><text x="785" y="217.9" text-anchor="middle" font-size="14.67" font-weight="bold" fill="#000">massSpringDamperNominal.k.x</text><rect x="450" y="535" width="669" height="224" fill="#fff"/><line x1="465.5" y1="536" x2="465.5" y2="758" stroke="#dedede" stroke-width="1"/><line x1="529.5" y1="536" x2="529.5" y2="758" stroke="#dedede" stroke-width="1"/><line x1="593.5" y1="536" x2="593.5" y2="758" stroke="#dedede" stroke-width="1"/><line x1="657.5" y1="536" x2="657.5" y2="758" stroke="#dedede" stroke-width="1"/><line x1="720.5" y1="536" x2="720.5" y2="758" stroke="#dedede" stroke-width="1"/><line x1="784.5" y1="536" x2="784.5" y2="758" stroke="#dedede" stroke-width="1"/><line x1="848.5" y1="536" x2="848.5" y2="758" stroke="#dedede" stroke-width="1"/><line x1="911.5" y1="536" x2="911.5" y2="758" stroke="#dedede" stroke-width="1"/><line x1="975.5" y1="536" x2="975.5" y2="758" stroke="#dedede" stroke-width="1"/><line x1="1039.5" y1="536" x2="1039.5" y2="758" stroke="#dedede" stroke-width="1"/><line x1="1103.5" y1="536" x2="1103.5" y2="758" stroke="#dedede" stroke-width="1"/><line x1="451" y1="535.5" x2="1118" y2="535.5" stroke="#dedede" stroke-width="1"/><line x1="451" y1="590.5" x2="1118" y2="590.5" stroke="#dedede" stroke-width="1"/><line x1="451" y1="646.5" x2="1118" y2="646.5" stroke="#dedede" stroke-width="1"/><line x1="451" y1="702.5" x2="1118" y2="702.5" stroke="#dedede" stroke-width="1"/><line x1="451" y1="758.5" x2="1118" y2="758.5" stroke="#dedede" stroke-width="1"/><path d="M465.50 757.62 L465.82 756.87 L466.14 755.80 L466.46 754.43 L466.78 752.76 L467.10 750.80 L467.41 748.54 L467.73 746.01 L468.05 743.21 L468.37 740.14 L468.69 736.83 L469.01 733.27 L469.33 729.49 L469.65 725.49 L469.97 721.28 L470.29 716.89 L470.60 712.32 L470.92 707.58 L471.24 702.70 L471.56 697.68 L471.88 692.55 L472.20 687.31 L472.52 681.98 L472.84 676.58 L473.16 671.13 L473.48 665.63 L473.79 660.12 L474.11 654.59 L474.43 649.07 L474.75 643.58 L475.07 638.12 L475.39 632.72 L475.71 627.39 L476.03 622.14 L476.35 617.00 L476.67 611.96 L476.98 607.06 L477.30 602.30 L477.62 597.69 L477.94 593.24 L478.26 588.98 L478.58 585.19 L478.90 581.58 L479.22 578.15 L479.54 574.91 L479.86 571.86 L480.17 569.01 L480.49 566.36 L480.81 563.93 L481.13 561.71 L481.45 559.72 L481.77 557.95 L482.09 556.40 L482.41 555.09 L482.73 554.01 L483.05 553.17 L483.36 552.56 L483.68 552.19 L484.00 552.05 L484.32 552.15 L484.64 552.48 L484.96 553.04 L485.28 553.82 L485.60 554.84 L485.92 556.08 L486.24 557.53 L486.55 559.20 L486.87 561.07 L487.19 563.15 L487.51 565.43 L487.83 567.89 L488.15 570.54 L488.47 573.36 L488.79 576.35 L489.11 579.49 L489.43 582.79 L489.74 586.23 L490.06 589.81 L490.38 593.50 L490.70 597.31 L491.02 601.22 L491.34 605.23 L491.66 609.32 L491.98 613.48 L492.30 617.70 L492.62 621.98 L492.93 626.29 L493.25 630.64 L493.57 635.00 L493.89 639.37 L494.21 643.74 L494.53 648.10 L494.85 652.43 L495.17 656.72 L495.49 660.97 L495.81 665.17 L496.12 669.29 L496.44 673.35 L496.76 677.32 L497.08 681.19 L497.40 684.96 L497.72 688.62 L498.04 692.16 L498.36 695.56 L498.68 698.84 L499.00 701.96 L499.31 704.94 L499.63 707.76 L499.95 710.42 L500.27 712.90 L500.59 715.21 L500.91 717.34 L501.23 719.29 L501.55 721.05 L501.87 722.62 L502.19 724.00 L502.50 725.17 L502.82 726.15 L503.14 726.93 L503.46 727.51 L503.78 727.89 L504.10 728.07 L504.42 728.04 L504.74 727.82 L505.06 727.40 L505.38 726.78 L505.69 725.97 L506.01 724.97 L506.33 723.78 L506.65 722.40 L506.97 720.85 L507.29 719.13 L507.61 717.23 L507.93 715.17 L508.25 712.96 L508.56 710.59 L508.88 708.08 L509.20 705.43 L509.52 702.65 L509.84 699.74 L510.16 696.72 L510.48 693.59 L510.80 690.37 L511.12 687.05 L511.44 683.65 L511.75 680.17 L512.07 676.64 L512.39 673.04 L512.71 669.40 L513.03 665.73 L513.35 662.02 L513.67 658.30 L513.99 654.57 L514.31 650.84 L514.63 647.11 L514.95 643.41 L515.26 639.73 L515.58 636.09 L515.90 632.49 L516.22 628.95 L516.54 625.47 L516.86 622.06 L517.18 618.73 L517.50 615.48 L517.82 612.33 L518.13 609.28 L518.45 606.34 L518.77 603.51 L519.09 600.80 L519.41 598.23 L519.73 595.78 L520.05 593.47 L520.37 591.31 L520.69 589.29 L521.01 587.43 L521.33 585.72 L521.64 584.17 L521.96 582.79 L522.28 581.57 L522.60 580.52 L522.92 579.63 L523.24 578.92 L523.56 578.38 L523.88 578.01 L524.20 577.81 L524.51 577.78 L524.83 577.93 L525.15 578.24 L525.47 578.72 L525.79 579.37 L526.11 580.18 L526.43 581.15 L526.75 582.28 L527.07 583.57 L527.39 585.00 L527.71 586.58 L528.02 588.30 L528.34 590.15 L528.66 592.14 L528.98 594.25 L529.30 596.48 L529.62 598.83 L529.94 601.28 L530.26 603.83 L530.58 606.48 L530.89 609.21 L531.21 612.02 L531.53 614.91 L531.85 617.86 L532.17 620.86 L532.49 623.92 L532.81 627.02 L533.13 630.15 L533.45 633.30 L533.77 636.48 L534.09 639.67 L534.40 642.85 L534.72 646.03 L535.04 649.20 L535.36 652.35 L535.68 655.47 L536.00 658.55 L536.32 661.59 L536.64 664.57 L536.96 667.50 L537.27 670.37 L537.59 673.16 L537.91 675.87 L538.23 678.50 L538.55 681.04 L538.87 683.48 L539.19 685.82 L539.51 688.05 L539.83 690.17 L540.15 692.17 L540.47 694.05 L540.78 695.81 L541.10 697.43 L541.42 698.93 L541.74 700.29 L542.06 701.51 L542.38 702.59 L542.70 703.52 L543.02 704.32 L543.34 704.97 L543.65 705.47 L543.97 705.82 L544.29 706.03 L544.61 706.10 L544.93 706.01 L545.25 705.78 L545.57 705.41 L545.89 704.90 L546.21 704.24 L546.53 703.45 L546.85 702.52 L547.16 701.46 L547.48 700.27 L547.80 698.96 L548.12 697.53 L548.44 695.97 L548.76 694.31 L549.08 692.53 L549.40 690.66 L549.72 688.68 L550.03 686.61 L550.35 684.46 L550.67 682.22 L550.99 679.91 L551.31 677.52 L551.63 675.08 L551.95 672.57 L552.27 670.02 L552.59 667.42 L552.91 664.79 L553.23 662.12 L553.54 659.43 L553.86 656.73 L554.18 654.01 L554.50 651.29 L554.82 648.57 L555.14 645.87 L555.46 643.17 L555.78 640.51 L556.10 637.87 L556.41 635.26 L556.73 632.70 L557.05 630.19 L557.37 627.73 L557.69 625.33 L558.01 622.99 L558.33 620.73 L558.65 618.54 L558.97 616.44 L559.29 614.42 L559.61 612.48 L559.92 610.65 L560.24 608.91 L560.56 607.28 L560.88 605.75 L561.20 604.33 L561.52 603.02 L561.84 601.83 L562.16 600.76 L562.48 599.80 L562.80 598.97 L563.11 598.26 L563.43 597.67 L563.75 597.20 L564.07 596.87 L564.39 596.65 L564.71 596.56 L565.03 596.60 L565.35 596.76 L565.67 597.04 L565.99 597.45 L566.30 597.97 L566.62 598.62 L566.94 599.38 L567.26 600.25 L567.58 601.23 L567.90 602.32 L568.22 603.52 L568.54 604.82 L568.86 606.21 L569.17 607.70 L569.49 609.28 L569.81 610.94 L570.13 612.68 L570.45 614.50 L570.77 616.39 L571.09 618.35 L571.41 620.36 L571.73 622.43 L572.05 624.56 L572.37 626.72 L572.68 628.93 L573.00 631.17 L573.32 633.44 L573.64 635.73 L573.96 638.03 L574.28 640.35 L574.60 642.67 L574.92 644.99 L575.24 647.30 L575.56 649.60 L575.87 651.88 L576.19 654.14 L576.51 656.37 L576.83 658.57 L577.15 660.73 L577.47 662.84 L577.79 664.90 L578.11 666.91 L578.43 668.86 L578.75 670.75 L579.06 672.56 L579.38 674.31 L579.70 675.98 L580.02 677.57 L580.34 679.07 L580.66 680.49 L580.98 681.83 L581.30 683.06 L581.62 684.21 L581.94 685.25 L582.25 686.20 L582.57 687.04 L582.89 687.79 L583.21 688.42 L583.53 688.96 L583.85 689.38 L584.17 689.71 L584.49 689.92 L584.81 690.03 L585.12 690.03 L585.44 689.92 L585.76 689.71 L586.08 689.40 L586.40 688.98 L586.72 688.46 L587.04 687.84 L587.36 687.13 L587.68 686.32 L588.00 685.41 L588.32 684.42 L588.63 683.34 L588.95 682.17 L589.27 680.93 L589.59 679.61 L589.91 678.21 L590.23 676.74 L590.55 675.21 L590.87 673.62 L591.19 671.97 L591.50 670.26 L591.82 668.51 L592.14 666.71 L592.46 664.88 L592.78 663.00 L593.10 661.10 L593.42 659.18 L593.74 657.23 L594.06 655.27 L594.38 653.29 L594.69 651.32 L595.01 649.34 L595.33 647.36 L595.65 645.40 L595.97 643.44 L596.29 641.51 L596.61 639.60 L596.93 637.72 L597.25 635.87 L597.57 634.05 L597.88 632.28 L598.20 630.55 L598.52 628.87 L598.84 627.25 L599.16 625.68 L599.48 624.17 L599.80 622.73 L600.12 621.35 L600.44 620.04 L600.76 618.81 L601.08 617.65 L601.39 616.56 L601.71 615.56 L602.03 614.64 L602.35 613.81 L602.67 613.06 L602.99 612.40 L603.31 611.83 L603.63 611.34 L603.95 610.95 L604.26 610.65 L604.58 610.43 L604.90 610.31 L605.22 610.28 L605.54 610.34 L605.86 610.49 L606.18 610.73 L606.50 611.06 L606.82 611.47 L607.14 611.97 L607.46 612.56 L607.77 613.22 L608.09 613.96 L608.41 614.79 L608.73 615.68 L609.05 616.65 L609.37 617.69 L609.69 618.80 L610.01 619.97 L610.33 621.20 L610.64 622.48 L610.96 623.83 L611.28 625.22 L611.60 626.66 L611.92 628.14 L612.24 629.66 L612.56 631.21 L612.88 632.80 L613.20 634.41 L613.52 636.05 L613.84 637.70 L614.15 639.37 L614.47 641.05 L614.79 642.73 L615.11 644.42 L615.43 646.11 L615.75 647.79 L616.07 649.45 L616.39 651.11 L616.71 652.74 L617.02 654.36 L617.34 655.95 L617.66 657.50 L617.98 659.03 L618.30 660.51 L618.62 661.96 L618.94 663.36 L619.26 664.72 L619.58 666.02 L619.90 667.27 L620.22 668.47 L620.53 669.60 L620.85 670.68 L621.17 671.69 L621.49 672.63 L621.81 673.51 L622.13 674.32 L622.45 675.06 L622.77 675.72 L623.09 676.31 L623.40 676.83 L623.72 677.27 L624.04 677.63 L624.36 677.92 L624.68 678.13 L625.00 678.26 L625.32 678.31 L625.64 678.29 L625.96 678.19 L626.28 678.02 L626.60 677.76 L626.91 677.44 L627.23 677.04 L627.55 676.57 L627.87 676.03 L628.19 675.42 L628.51 674.74 L628.83 674.00 L629.15 673.20 L629.47 672.34 L629.79 671.42 L630.10 670.44 L630.42 669.41 L630.74 668.33 L631.06 667.21 L631.38 666.04 L631.70 664.82 L632.02 663.58 L632.34 662.29 L632.66 660.98 L632.98 659.64 L633.29 658.27 L633.61 656.89 L633.93 655.48 L634.25 654.06 L634.57 652.64 L634.89 651.20 L635.21 649.76 L635.53 648.33 L635.85 646.89 L636.16 645.47 L636.48 644.05 L636.80 642.65 L637.12 641.27 L637.44 639.91 L637.76 638.57 L638.08 637.26 L638.40 635.98 L638.72 634.74 L639.04 633.53 L639.36 632.35 L639.67 631.23 L639.99 630.14 L640.31 629.10 L640.63 628.12 L640.95 627.18 L641.27 626.29 L641.59 625.47 L641.91 624.69 L642.23 623.98 L642.55 623.33 L642.86 622.74 L643.18 622.21 L643.50 621.74 L643.82 621.34 L644.14 621.00 L644.46 620.73 L644.78 620.53 L645.10 620.39 L645.42 620.31 L645.74 620.30 L646.05 620.36 L646.37 620.49 L646.69 620.67 L647.01 620.92 L647.33 621.24 L647.65 621.61 L647.97 622.05 L648.29 622.54 L648.61 623.09 L648.92 623.70 L649.24 624.36 L649.56 625.07 L649.88 625.84 L650.20 626.65 L650.52 627.51 L650.84 628.41 L651.16 629.35 L651.48 630.33 L651.80 631.35 L652.12 632.40 L652.43 633.48 L652.75 634.58 L653.07 635.72 L653.39 636.87 L653.71 638.05 L654.03 639.24 L654.35 640.44 L654.67 641.65 L654.99 642.87 L655.31 644.09 L655.62 645.32 L655.94 646.54 L656.26 647.76 L656.58 648.97 L656.90 650.17 L657.22 651.35 L657.54 652.52 L657.86 653.67 L658.18 654.79 L658.50 655.90 L658.81 656.97 L659.13 658.02 L659.45 659.03 L659.77 660.01 L660.09 660.95 L660.41 661.85 L660.73 662.71 L661.05 663.53 L661.37 664.30 L661.69 665.03 L662.00 665.71 L662.32 666.34 L662.64 666.92 L662.96 667.45 L663.28 667.93 L663.60 668.35 L663.92 668.72 L664.24 669.03 L664.56 669.29 L664.88 669.49 L665.19 669.63 L665.51 669.72 L665.83 669.76 L666.15 669.73 L666.47 669.66 L666.79 669.52 L667.11 669.34 L667.43 669.10 L667.75 668.80 L668.07 668.46 L668.38 668.06 L668.70 667.61 L669.02 667.12 L669.34 666.58 L669.66 665.99 L669.98 665.36 L670.30 664.69 L670.62 663.98 L670.94 663.23 L671.25 662.45 L671.57 661.63 L671.89 660.78 L672.21 659.90 L672.53 658.99 L672.85 658.06 L673.17 657.11 L673.49 656.13 L673.81 655.14 L674.13 654.14 L674.45 653.12 L674.76 652.09 L675.08 651.06 L675.40 650.01 L675.72 648.97 L676.04 647.93 L676.36 646.89 L676.68 645.86 L677.00 644.83 L677.32 643.82 L677.63 642.82 L677.95 641.83 L678.27 640.86 L678.59 639.91 L678.91 638.98 L679.23 638.08 L679.55 637.21 L679.87 636.36 L680.19 635.54 L680.51 634.75 L680.83 634.00 L681.14 633.29 L681.46 632.61 L681.78 631.97 L682.10 631.36 L682.42 630.81 L682.74 630.29 L683.06 629.81 L683.38 629.38 L683.70 629.00 L684.01 628.66 L684.33 628.37 L684.65 628.13 L684.97 627.93 L685.29 627.78 L685.61 627.67 L685.93 627.62 L686.25 627.61 L686.57 627.65 L686.89 627.74 L687.21 627.87 L687.52 628.05 L687.84 628.28 L688.16 628.55 L688.48 628.86 L688.80 629.22 L689.12 629.61 L689.44 630.05 L689.76 630.53 L690.08 631.04 L690.39 631.59 L690.71 632.18 L691.03 632.80 L691.35 633.45 L691.67 634.13 L691.99 634.84 L692.31 635.57 L692.63 636.33 L692.95 637.11 L693.27 637.91 L693.59 638.73 L693.90 639.57 L694.22 640.41 L694.54 641.27 L694.86 642.14 L695.18 643.02 L695.50 643.91 L695.82 644.79 L696.14 645.68 L696.46 646.56 L696.78 647.45 L697.09 648.32 L697.41 649.19 L697.73 650.05 L698.05 650.90 L698.37 651.73 L698.69 652.55 L699.01 653.35 L699.33 654.13 L699.65 654.89 L699.97 655.63 L700.28 656.34 L700.60 657.02 L700.92 657.68 L701.24 658.31 L701.56 658.91 L701.88 659.47 L702.20 660.00 L702.52 660.50 L702.84 660.96 L703.15 661.39 L703.47 661.78 L703.79 662.13 L704.11 662.44 L704.43 662.72 L704.75 662.95 L705.07 663.14 L705.39 663.30 L705.71 663.41 L706.03 663.48 L706.35 663.51 L706.66 663.50 L706.98 663.46 L707.30 663.37 L707.62 663.24 L707.94 663.07 L708.26 662.87 L708.58 662.63 L708.90 662.35 L709.22 662.03 L709.53 661.68 L709.85 661.30 L710.17 660.88 L710.49 660.43 L710.81 659.95 L711.13 659.45 L711.45 658.91 L711.77 658.35 L712.09 657.76 L712.41 657.15 L712.73 656.52 L713.04 655.87 L713.36 655.20 L713.68 654.51 L714.00 653.81 L714.32 653.10 L714.64 652.37 L714.96 651.64 L715.28 650.90 L715.60 650.15 L715.91 649.40 L716.23 648.64 L716.55 647.89 L716.87 647.14 L717.19 646.39 L717.51 645.65 L717.83 644.91 L718.15 644.18 L718.47 643.46 L718.79 642.76 L719.11 642.07 L719.42 641.39 L719.74 640.73 L720.06 640.09 L720.38 639.47 L720.70 638.88 L721.02 638.30 L721.34 637.75 L721.66 637.22 L721.98 636.72 L722.30 636.25 L722.61 635.81 L722.93 635.39 L723.25 635.01 L723.57 634.65 L723.89 634.33 L724.21 634.04 L724.53 633.79 L724.85 633.56 L725.17 633.37 L725.49 633.22 L725.80 633.10 L726.12 633.01 L726.44 632.96 L726.76 632.94 L727.08 632.96 L727.40 633.01 L727.72 633.09 L728.04 633.21 L728.36 633.36 L728.67 633.54 L728.99 633.75 L729.31 634.00 L729.63 634.28 L729.95 634.58 L730.27 634.91 L730.59 635.27 L730.91 635.66 L731.23 636.08 L731.55 636.51 L731.87 636.97 L732.18 637.46 L732.50 637.96 L732.82 638.48 L733.14 639.02 L733.46 639.58 L733.78 640.15 L734.10 640.74 L734.42 641.34 L734.74 641.95 L735.06 642.56 L735.37 643.19 L735.69 643.82 L736.01 644.46 L736.33 645.10 L736.65 645.74 L736.97 646.38 L737.29 647.02 L737.61 647.65 L737.93 648.28 L738.25 648.91 L738.56 649.52 L738.88 650.13 L739.20 650.73 L739.52 651.31 L739.84 651.88 L740.16 652.44 L740.48 652.98 L740.80 653.50 L741.12 654.01 L741.43 654.49 L741.75 654.96 L742.07 655.40 L742.39 655.82 L742.71 656.22 L743.03 656.59 L743.35 656.94 L743.67 657.26 L743.99 657.56 L744.31 657.83 L744.62 658.07 L744.94 658.28 L745.26 658.46 L745.58 658.62 L745.90 658.75 L746.22 658.84 L746.54 658.91 L746.86 658.95 L747.18 658.96 L747.50 658.95 L747.82 658.90 L748.13 658.82 L748.45 658.72 L748.77 658.59 L749.09 658.43 L749.41 658.24 L749.73 658.03 L750.05 657.79 L750.37 657.53 L750.69 657.24 L751.01 656.93 L751.32 656.60 L751.64 656.25 L751.96 655.87 L752.28 655.48 L752.60 655.07 L752.92 654.64 L753.24 654.19 L753.56 653.73 L753.88 653.26 L754.20 652.77 L754.51 652.27 L754.83 651.76 L755.15 651.24 L755.47 650.72 L755.79 650.18 L756.11 649.65 L756.43 649.11 L756.75 648.56 L757.07 648.02 L757.38 647.48 L757.70 646.93 L758.02 646.39 L758.34 645.86 L758.66 645.33 L758.98 644.81 L759.30 644.29 L759.62 643.79 L759.94 643.29 L760.26 642.81 L760.58 642.34 L760.89 641.88 L761.21 641.44 L761.53 641.01 L761.85 640.60 L762.17 640.20 L762.49 639.83 L762.81 639.47 L763.13 639.14 L763.45 638.82 L763.76 638.53 L764.08 638.26 L764.40 638.01 L764.72 637.78 L765.04 637.58 L765.36 637.40 L765.68 637.24 L766.00 637.11 L766.32 637.00 L766.64 636.92 L766.95 636.87 L767.27 636.83 L767.59 636.82 L767.91 636.84 L768.23 636.88 L768.55 636.95 L768.87 637.04 L769.19 637.15 L769.51 637.28 L769.83 637.44 L770.14 637.62 L770.46 637.82 L770.78 638.05 L771.10 638.29 L771.42 638.55 L771.74 638.84 L772.06 639.14 L772.38 639.45 L772.70 639.79 L773.02 640.14 L773.34 640.50 L773.65 640.88 L773.97 641.27 L774.29 641.68 L774.61 642.09 L774.93 642.51 L775.25 642.95 L775.57 643.39 L775.89 643.83 L776.21 644.28 L776.53 644.74 L776.84 645.20 L777.16 645.66 L777.48 646.12 L777.80 646.58 L778.12 647.04 L778.44 647.50 L778.76 647.95 L779.08 648.40 L779.40 648.85 L779.72 649.28 L780.03 649.71 L780.35 650.13 L780.67 650.55 L780.99 650.95 L781.31 651.34 L781.63 651.71 L781.95 652.08 L782.27 652.42 L782.59 652.76 L782.90 653.08 L783.22 653.38 L783.54 653.67 L783.86 653.94 L784.18 654.19 L784.50 654.42 L784.82 654.63 L785.14 654.82 L785.46 655.00 L785.78 655.15 L786.10 655.29 L786.41 655.40 L786.73 655.49 L787.05 655.56 L787.37 655.61 L787.69 655.64 L788.01 655.65 L788.33 655.64 L788.65 655.61 L788.97 655.55 L789.29 655.48 L789.60 655.39 L789.92 655.27 L790.24 655.14 L790.56 654.99 L790.88 654.82 L791.20 654.63 L791.52 654.43 L791.84 654.21 L792.16 653.97 L792.48 653.72 L792.79 653.45 L793.11 653.17 L793.43 652.87 L793.75 652.56 L794.07 652.24 L794.39 651.91 L794.71 651.57 L795.03 651.22 L795.35 650.87 L795.66 650.50 L795.98 650.13 L796.30 649.75 L796.62 649.37 L796.94 648.98 L797.26 648.59 L797.58 648.20 L797.90 647.81 L798.22 647.42 L798.54 647.03 L798.86 646.64 L799.17 646.26 L799.49 645.87 L799.81 645.50 L800.13 645.12 L800.45 644.76 L800.77 644.40 L801.09 644.05 L801.41 643.71 L801.73 643.38 L802.05 643.06 L802.36 642.75 L802.68 642.45 L803.00 642.16 L803.32 641.89 L803.64 641.63 L803.96 641.38 L804.28 641.15 L804.60 640.94 L804.92 640.74 L805.24 640.55 L805.55 640.39 L805.87 640.23 L806.19 640.10 L806.51 639.98 L806.83 639.88 L807.15 639.80 L807.47 639.74 L807.79 639.69 L808.11 639.66 L808.42 639.65 L808.74 639.66 L809.06 639.68 L809.38 639.72 L809.70 639.78 L810.02 639.85 L810.34 639.95 L810.66 640.05 L810.98 640.18 L811.30 640.32 L811.62 640.47 L811.93 640.64 L812.25 640.83 L812.57 641.02 L812.89 641.23 L813.21 641.46 L813.53 641.69 L813.85 641.94 L814.17 642.20 L814.49 642.47 L814.81 642.74 L815.12 643.03 L815.44 643.32 L815.76 643.63 L816.08 643.93 L816.40 644.25 L816.72 644.57 L817.04 644.89 L817.36 645.22 L817.68 645.54 L818.00 645.87 L818.31 646.21 L818.63 646.54 L818.95 646.87 L819.27 647.20 L819.59 647.53 L819.91 647.85 L820.23 648.17 L820.55 648.49 L820.87 648.80 L821.18 649.11 L821.50 649.41 L821.82 649.70 L822.14 649.98 L822.46 650.26 L822.78 650.52 L823.10 650.78 L823.42 651.02 L823.74 651.26 L824.06 651.48 L824.38 651.70 L824.69 651.90 L825.01 652.08 L825.33 652.26 L825.65 652.42 L825.97 652.57 L826.29 652.70 L826.61 652.82 L826.93 652.92 L827.25 653.01 L827.57 653.09 L827.88 653.15 L828.20 653.19 L828.52 653.22 L828.84 653.24 L829.16 653.24 L829.48 653.23 L829.80 653.20 L830.12 653.15 L830.44 653.10 L830.75 653.02 L831.07 652.94 L831.39 652.84 L831.71 652.73 L832.03 652.60 L832.35 652.46 L832.67 652.31 L832.99 652.15 L833.31 651.97 L833.63 651.79 L833.94 651.59 L834.26 651.39 L834.58 651.17 L834.90 650.95 L835.22 650.72 L835.54 650.48 L835.86 650.23 L836.18 649.98 L836.50 649.72 L836.82 649.46 L837.13 649.19 L837.45 648.92 L837.77 648.64 L838.09 648.37 L838.41 648.09 L838.73 647.81 L839.05 647.53 L839.37 647.25 L839.69 646.97 L840.01 646.69 L840.33 646.41 L840.64 646.14 L840.96 645.87 L841.28 645.60 L841.60 645.34 L841.92 645.08 L842.24 644.83 L842.56 644.59 L842.88 644.35 L843.20 644.12 L843.52 643.90 L843.83 643.69 L844.15 643.49 L844.47 643.29 L844.79 643.11 L845.11 642.93 L845.43 642.77 L845.75 642.62 L846.07 642.47 L846.39 642.34 L846.71 642.22 L847.02 642.12 L847.34 642.02 L847.66 641.94 L847.98 641.87 L848.30 641.81 L848.62 641.76 L848.94 641.73 L849.26 641.71 L849.58 641.70 L849.89 641.71 L850.21 641.73 L850.53 641.76 L850.85 641.80 L851.17 641.85 L851.49 641.92 L851.81 641.99 L852.13 642.08 L852.45 642.18 L852.77 642.30 L853.09 642.42 L853.40 642.55 L853.72 642.69 L854.04 642.84 L854.36 643.00 L854.68 643.17 L855.00 643.35 L855.32 643.53 L855.64 643.72 L855.96 643.92 L856.28 644.13 L856.59 644.34 L856.91 644.55 L857.23 644.77 L857.55 645.00 L857.87 645.22 L858.19 645.46 L858.51 645.69 L858.83 645.92 L859.15 646.16 L859.47 646.40 L859.78 646.64 L860.10 646.87 L860.42 647.11 L860.74 647.34 L861.06 647.58 L861.38 647.81 L861.70 648.04 L862.02 648.26 L862.34 648.48 L862.65 648.69 L862.97 648.90 L863.29 649.11 L863.61 649.31 L863.93 649.50 L864.25 649.68 L864.57 649.86 L864.89 650.03 L865.21 650.19 L865.53 650.35 L865.85 650.49 L866.16 650.63 L866.48 650.75 L866.80 650.87 L867.12 650.98 L867.44 651.08 L867.76 651.17 L868.08 651.24 L868.40 651.31 L868.72 651.37 L869.04 651.41 L869.35 651.45 L869.67 651.47 L869.99 651.49 L870.31 651.49 L870.63 651.49 L870.95 651.47 L871.27 651.44 L871.59 651.40 L871.91 651.35 L872.23 651.30 L872.54 651.23 L872.86 651.15 L873.18 651.06 L873.50 650.97 L873.82 650.86 L874.14 650.75 L874.46 650.63 L874.78 650.50 L875.10 650.36 L875.41 650.22 L875.73 650.07 L876.05 649.91 L876.37 649.75 L876.69 649.58 L877.01 649.40 L877.33 649.22 L877.65 649.04 L877.97 648.85 L878.29 648.66 L878.61 648.47 L878.92 648.28 L879.24 648.08 L879.56 647.88 L879.88 647.68 L880.20 647.48 L880.52 647.28 L880.84 647.08 L881.16 646.88 L881.48 646.68 L881.80 646.48 L882.11 646.29 L882.43 646.10 L882.75 645.91 L883.07 645.72 L883.39 645.54 L883.71 645.36 L884.03 645.19 L884.35 645.03 L884.67 644.86 L884.99 644.71 L885.30 644.56 L885.62 644.42 L885.94 644.28 L886.26 644.15 L886.58 644.03 L886.90 643.91 L887.22 643.81 L887.54 643.71 L887.86 643.62 L888.17 643.54 L888.49 643.46 L888.81 643.40 L889.13 643.34 L889.45 643.30 L889.77 643.26 L890.09 643.23 L890.41 643.21 L890.73 643.20 L891.05 643.19 L891.37 643.20 L891.68 643.21 L892.00 643.24 L892.32 643.27 L892.64 643.31 L892.96 643.36 L893.28 643.42 L893.60 643.49 L893.92 643.56 L894.24 643.64 L894.56 643.73 L894.87 643.82 L895.19 643.93 L895.51 644.04 L895.83 644.15 L896.15 644.27 L896.47 644.40 L896.79 644.53 L897.11 644.67 L897.43 644.82 L897.75 644.96 L898.06 645.11 L898.38 645.27 L898.70 645.43 L899.02 645.59 L899.34 645.75 L899.66 645.91 L899.98 646.08 L900.30 646.25 L900.62 646.42 L900.94 646.59 L901.25 646.76 L901.57 646.93 L901.89 647.10 L902.21 647.26 L902.53 647.43 L902.85 647.59 L903.17 647.76 L903.49 647.91 L903.81 648.07 L904.12 648.22 L904.44 648.37 L904.76 648.52 L905.08 648.66 L905.40 648.80 L905.72 648.93 L906.04 649.06 L906.36 649.18 L906.68 649.29 L907.00 649.40 L907.32 649.51 L907.63 649.60 L907.95 649.69 L908.27 649.78 L908.59 649.85 L908.91 649.92 L909.23 649.99 L909.55 650.04 L909.87 650.09 L910.19 650.13 L910.51 650.17 L910.82 650.19 L911.14 650.21 L911.46 650.22 L911.78 650.22 L912.10 650.22 L912.42 650.21 L912.74 650.19 L913.06 650.16 L913.38 650.13 L913.70 650.09 L914.01 650.04 L914.33 649.99 L914.65 649.93 L914.97 649.86 L915.29 649.78 L915.61 649.70 L915.93 649.62 L916.25 649.53 L916.57 649.43 L916.88 649.33 L917.20 649.22 L917.52 649.11 L917.84 649.00 L918.16 648.88 L918.48 648.75 L918.80 648.63 L919.12 648.50 L919.44 648.36 L919.76 648.23 L920.08 648.09 L920.39 647.95 L920.71 647.81 L921.03 647.67 L921.35 647.53 L921.67 647.39 L921.99 647.24 L922.31 647.10 L922.63 646.96 L922.95 646.82 L923.27 646.68 L923.58 646.54 L923.90 646.40 L924.22 646.26 L924.54 646.13 L924.86 646.00 L925.18 645.87 L925.50 645.75 L925.82 645.63 L926.14 645.51 L926.46 645.40 L926.77 645.29 L927.09 645.19 L927.41 645.09 L927.73 645.00 L928.05 644.91 L928.37 644.82 L928.69 644.75 L929.01 644.67 L929.33 644.61 L929.64 644.54 L929.96 644.49 L930.28 644.44 L930.60 644.40 L930.92 644.36 L931.24 644.33 L931.56 644.31 L931.88 644.29 L932.20 644.28 L932.52 644.27 L932.84 644.27 L933.15 644.28 L933.47 644.29 L933.79 644.31 L934.11 644.34 L934.43 644.37 L934.75 644.41 L935.07 644.45 L935.39 644.50 L935.71 644.56 L936.03 644.62 L936.34 644.68 L936.66 644.75 L936.98 644.83 L937.30 644.91 L937.62 644.99 L937.94 645.08 L938.26 645.17 L938.58 645.27 L938.90 645.37 L939.22 645.47 L939.53 645.57 L939.85 645.68 L940.17 645.79 L940.49 645.91 L940.81 646.02 L941.13 646.14 L941.45 646.26 L941.77 646.37 L942.09 646.49 L942.40 646.61 L942.72 646.74 L943.04 646.86 L943.36 646.98 L943.68 647.10 L944.00 647.21 L944.32 647.33 L944.64 647.45 L944.96 647.56 L945.28 647.68 L945.60 647.79 L945.91 647.90 L946.23 648.00 L946.55 648.10 L946.87 648.20 L947.19 648.30 L947.51 648.39 L947.83 648.48 L948.15 648.57 L948.47 648.65 L948.78 648.73 L949.10 648.80 L949.42 648.87 L949.74 648.93 L950.06 648.99 L950.38 649.05 L950.70 649.10 L951.02 649.14 L951.34 649.18 L951.66 649.21 L951.97 649.24 L952.29 649.27 L952.61 649.28 L952.93 649.30 L953.25 649.30 L953.57 649.31 L953.89 649.30 L954.21 649.30 L954.53 649.28 L954.85 649.26 L955.16 649.24 L955.48 649.21 L955.80 649.18 L956.12 649.14 L956.44 649.10 L956.76 649.05 L957.08 649.00 L957.40 648.94 L957.72 648.88 L958.04 648.81 L958.36 648.75 L958.67 648.67 L958.99 648.60 L959.31 648.52 L959.63 648.44 L959.95 648.35 L960.27 648.27 L960.59 648.18 L960.91 648.09 L961.23 647.99 L961.55 647.90 L961.86 647.80 L962.18 647.70 L962.50 647.60 L962.82 647.50 L963.14 647.40 L963.46 647.30 L963.78 647.20 L964.10 647.10 L964.42 646.99 L964.74 646.89 L965.05 646.79 L965.37 646.69 L965.69 646.60 L966.01 646.50 L966.33 646.41 L966.65 646.31 L966.97 646.22 L967.29 646.13 L967.61 646.05 L967.92 645.96 L968.24 645.88 L968.56 645.81 L968.88 645.73 L969.20 645.66 L969.52 645.59 L969.84 645.53 L970.16 645.47 L970.48 645.41 L970.80 645.36 L971.12 645.31 L971.43 645.26 L971.75 645.22 L972.07 645.19 L972.39 645.15 L972.71 645.13 L973.03 645.10 L973.35 645.08 L973.67 645.07 L973.99 645.06 L974.31 645.05 L974.62 645.05 L974.94 645.05 L975.26 645.06 L975.58 645.07 L975.90 645.09 L976.22 645.11 L976.54 645.14 L976.86 645.16 L977.18 645.20 L977.50 645.23 L977.81 645.27 L978.13 645.32 L978.45 645.37 L978.77 645.42 L979.09 645.47 L979.41 645.53 L979.73 645.59 L980.05 645.65 L980.37 645.72 L980.69 645.79 L981.00 645.86 L981.32 645.93 L981.64 646.01 L981.96 646.09 L982.28 646.16 L982.60 646.25 L982.92 646.33 L983.24 646.41 L983.56 646.49 L983.88 646.58 L984.19 646.66 L984.51 646.75 L984.83 646.83 L985.15 646.92 L985.47 647.00 L985.79 647.09 L986.11 647.17 L986.43 647.26 L986.75 647.34 L987.07 647.42 L987.38 647.50 L987.70 647.58 L988.02 647.65 L988.34 647.73 L988.66 647.80 L988.98 647.87 L989.30 647.94 L989.62 648.00 L989.94 648.07 L990.25 648.13 L990.57 648.18 L990.89 648.24 L991.21 648.29 L991.53 648.34 L991.85 648.38 L992.17 648.42 L992.49 648.46 L992.81 648.50 L993.13 648.53 L993.45 648.56 L993.76 648.58 L994.08 648.60 L994.40 648.62 L994.72 648.63 L995.04 648.64 L995.36 648.64 L995.68 648.64 L996.00 648.64 L996.32 648.64 L996.63 648.63 L996.95 648.61 L997.27 648.60 L997.59 648.58 L997.91 648.55 L998.23 648.53 L998.55 648.50 L998.87 648.46 L999.19 648.43 L999.51 648.39 L999.83 648.34 L1000.14 648.30 L1000.46 648.25 L1000.78 648.20 L1001.10 648.15 L1001.42 648.09 L1001.74 648.04 L1002.06 647.98 L1002.38 647.91 L1002.70 647.85 L1003.01 647.79 L1003.33 647.72 L1003.65 647.65 L1003.97 647.59 L1004.29 647.52 L1004.61 647.45 L1004.93 647.37 L1005.25 647.30 L1005.57 647.23 L1005.89 647.16 L1006.21 647.09 L1006.52 647.02 L1006.84 646.95 L1007.16 646.87 L1007.48 646.80 L1007.80 646.74 L1008.12 646.67 L1008.44 646.60 L1008.76 646.53 L1009.08 646.47 L1009.40 646.41 L1009.71 646.34 L1010.03 646.29 L1010.35 646.23 L1010.67 646.17 L1010.99 646.12 L1011.31 646.07 L1011.63 646.02 L1011.95 645.97 L1012.27 645.93 L1012.59 645.89 L1012.90 645.85 L1013.22 645.81 L1013.54 645.78 L1013.86 645.75 L1014.18 645.72 L1014.50 645.70 L1014.82 645.68 L1015.14 645.66 L1015.46 645.64 L1015.78 645.63 L1016.09 645.62 L1016.41 645.62 L1016.73 645.61 L1017.05 645.61 L1017.37 645.62 L1017.69 645.62 L1018.01 645.63 L1018.33 645.65 L1018.65 645.66 L1018.97 645.68 L1019.28 645.70 L1019.60 645.73 L1019.92 645.75 L1020.24 645.78 L1020.56 645.81 L1020.88 645.85 L1021.20 645.89 L1021.52 645.92 L1021.84 645.97 L1022.16 646.01 L1022.47 646.06 L1022.79 646.10 L1023.11 646.15 L1023.43 646.20 L1023.75 646.25 L1024.07 646.31 L1024.39 646.36 L1024.71 646.42 L1025.03 646.48 L1025.35 646.53 L1025.66 646.59 L1025.98 646.65 L1026.30 646.71 L1026.62 646.77 L1026.94 646.83 L1027.26 646.89 L1027.58 646.95 L1027.90 647.01 L1028.22 647.07 L1028.54 647.13 L1028.85 647.19 L1029.17 647.25 L1029.49 647.30 L1029.81 647.36 L1030.13 647.41 L1030.45 647.47 L1030.77 647.52 L1031.09 647.57 L1031.41 647.62 L1031.72 647.67 L1032.04 647.71 L1032.36 647.76 L1032.68 647.80 L1033.00 647.84 L1033.32 647.88 L1033.64 647.92 L1033.96 647.95 L1034.28 647.98 L1034.60 648.01 L1034.91 648.04 L1035.23 648.06 L1035.55 648.08 L1035.87 648.10 L1036.19 648.12 L1036.51 648.14 L1036.83 648.15 L1037.15 648.16 L1037.47 648.16 L1037.79 648.17 L1038.11 648.17 L1038.42 648.17 L1038.74 648.16 L1039.06 648.16 L1039.38 648.15 L1039.70 648.14 L1040.02 648.12 L1040.34 648.11 L1040.66 648.09 L1040.98 648.07 L1041.30 648.05 L1041.61 648.02 L1041.93 647.99 L1042.25 647.96 L1042.57 647.93 L1042.89 647.90 L1043.21 647.86 L1043.53 647.83 L1043.85 647.79 L1044.17 647.75 L1044.49 647.71 L1044.80 647.66 L1045.12 647.62 L1045.44 647.58 L1045.76 647.53 L1046.08 647.48 L1046.40 647.43 L1046.72 647.39 L1047.04 647.34 L1047.36 647.29 L1047.67 647.24 L1047.99 647.19 L1048.31 647.14 L1048.63 647.09 L1048.95 647.04 L1049.27 646.99 L1049.59 646.94 L1049.91 646.89 L1050.23 646.84 L1050.55 646.79 L1050.87 646.74 L1051.18 646.69 L1051.50 646.65 L1051.82 646.60 L1052.14 646.56 L1052.46 646.52 L1052.78 646.48 L1053.10 646.44 L1053.42 646.40 L1053.74 646.36 L1054.05 646.32 L1054.37 646.29 L1054.69 646.26 L1055.01 646.23 L1055.33 646.20 L1055.65 646.17 L1055.97 646.15 L1056.29 646.13 L1056.61 646.11 L1056.93 646.09 L1057.24 646.07 L1057.56 646.06 L1057.88 646.04 L1058.20 646.03 L1058.52 646.03 L1058.84 646.02 L1059.16 646.02 L1059.48 646.02 L1059.80 646.02 L1060.12 646.02 L1060.43 646.03 L1060.75 646.03 L1061.07 646.04 L1061.39 646.05 L1061.71 646.07 L1062.03 646.08 L1062.35 646.10 L1062.67 646.12 L1062.99 646.14 L1063.31 646.16 L1063.62 646.19 L1063.94 646.21 L1064.26 646.24 L1064.58 646.27 L1064.90 646.30 L1065.22 646.33 L1065.54 646.37 L1065.86 646.40 L1066.18 646.44 L1066.50 646.47 L1066.82 646.51 L1067.13 646.55 L1067.45 646.59 L1067.77 646.63 L1068.09 646.67 L1068.41 646.71 L1068.73 646.75 L1069.05 646.79 L1069.37 646.83 L1069.69 646.88 L1070.01 646.92 L1070.32 646.96 L1070.64 647.00 L1070.96 647.04 L1071.28 647.09 L1071.60 647.13 L1071.92 647.17 L1072.24 647.21 L1072.56 647.25 L1072.88 647.29 L1073.20 647.32 L1073.51 647.36 L1073.83 647.40 L1074.15 647.43 L1074.47 647.47 L1074.79 647.50 L1075.11 647.53 L1075.43 647.56 L1075.75 647.59 L1076.07 647.61 L1076.38 647.64 L1076.70 647.66 L1077.02 647.69 L1077.34 647.71 L1077.66 647.73 L1077.98 647.75 L1078.30 647.76 L1078.62 647.78 L1078.94 647.79 L1079.26 647.80 L1079.58 647.81 L1079.89 647.82 L1080.21 647.82 L1080.53 647.82 L1080.85 647.83 L1081.17 647.83 L1081.49 647.82 L1081.81 647.82 L1082.13 647.82 L1082.45 647.81 L1082.76 647.80 L1083.08 647.79 L1083.40 647.78 L1083.72 647.76 L1084.04 647.75 L1084.36 647.73 L1084.68 647.71 L1085.00 647.69 L1085.32 647.67 L1085.64 647.65 L1085.95 647.63 L1086.27 647.60 L1086.59 647.57 L1086.91 647.55 L1087.23 647.52 L1087.55 647.49 L1087.87 647.46 L1088.19 647.43 L1088.51 647.40 L1088.83 647.36 L1089.14 647.33 L1089.46 647.30 L1089.78 647.26 L1090.10 647.23 L1090.42 647.19 L1090.74 647.16 L1091.06 647.12 L1091.38 647.09 L1091.70 647.05 L1092.02 647.02 L1092.34 646.98 L1092.65 646.95 L1092.97 646.91 L1093.29 646.88 L1093.61 646.85 L1093.93 646.81 L1094.25 646.78 L1094.57 646.75 L1094.89 646.72 L1095.21 646.69 L1095.53 646.66 L1095.84 646.63 L1096.16 646.60 L1096.48 646.57 L1096.80 646.55 L1097.12 646.52 L1097.44 646.50 L1097.76 646.48 L1098.08 646.46 L1098.40 646.44 L1098.72 646.42 L1099.03 646.40 L1099.35 646.38 L1099.67 646.37 L1099.99 646.36 L1100.31 646.35 L1100.63 646.34 L1100.95 646.33 L1101.27 646.32 L1101.59 646.31 L1101.91 646.31 L1102.22 646.31 L1102.54 646.31 L1102.86 646.31 L1103.18 646.31 L1103.50 646.31" fill="none" stroke="#0072bd" stroke-width="1.2" stroke-linejoin="round"/><rect x="450.5" y="535.5" width="668" height="223" fill="none" stroke="#262626" stroke-width="1"/><line x1="465.5" y1="758" x2="465.5" y2="752" stroke="#262626"/><line x1="465.5" y1="536" x2="465.5" y2="542" stroke="#262626"/><text x="465.5" y="777.5" text-anchor="middle" font-size="13.33" fill="#262626">0</text><line x1="529.5" y1="758" x2="529.5" y2="752" stroke="#262626"/><line x1="529.5" y1="536" x2="529.5" y2="542" stroke="#262626"/><text x="529.5" y="777.5" text-anchor="middle" font-size="13.33" fill="#262626">0.01</text><line x1="593.5" y1="758" x2="593.5" y2="752" stroke="#262626"/><line x1="593.5" y1="536" x2="593.5" y2="542" stroke="#262626"/><text x="593.5" y="777.5" text-anchor="middle" font-size="13.33" fill="#262626">0.02</text><line x1="657.5" y1="758" x2="657.5" y2="752" stroke="#262626"/><line x1="657.5" y1="536" x2="657.5" y2="542" stroke="#262626"/><text x="657.5" y="777.5" text-anchor="middle" font-size="13.33" fill="#262626">0.03</text><line x1="720.5" y1="758" x2="720.5" y2="752" stroke="#262626"/><line x1="720.5" y1="536" x2="720.5" y2="542" stroke="#262626"/><text x="720.5" y="777.5" text-anchor="middle" font-size="13.33" fill="#262626">0.04</text><line x1="784.5" y1="758" x2="784.5" y2="752" stroke="#262626"/><line x1="784.5" y1="536" x2="784.5" y2="542" stroke="#262626"/><text x="784.5" y="777.5" text-anchor="middle" font-size="13.33" fill="#262626">0.05</text><line x1="848.5" y1="758" x2="848.5" y2="752" stroke="#262626"/><line x1="848.5" y1="536" x2="848.5" y2="542" stroke="#262626"/><text x="848.5" y="777.5" text-anchor="middle" font-size="13.33" fill="#262626">0.06</text><line x1="911.5" y1="758" x2="911.5" y2="752" stroke="#262626"/><line x1="911.5" y1="536" x2="911.5" y2="542" stroke="#262626"/><text x="911.5" y="777.5" text-anchor="middle" font-size="13.33" fill="#262626">0.07</text><line x1="975.5" y1="758" x2="975.5" y2="752" stroke="#262626"/><line x1="975.5" y1="536" x2="975.5" y2="542" stroke="#262626"/><text x="975.5" y="777.5" text-anchor="middle" font-size="13.33" fill="#262626">0.08</text><line x1="1039.5" y1="758" x2="1039.5" y2="752" stroke="#262626"/><line x1="1039.5" y1="536" x2="1039.5" y2="542" stroke="#262626"/><text x="1039.5" y="777.5" text-anchor="middle" font-size="13.33" fill="#262626">0.09</text><line x1="1103.5" y1="758" x2="1103.5" y2="752" stroke="#262626"/><line x1="1103.5" y1="536" x2="1103.5" y2="542" stroke="#262626"/><text x="1103.5" y="777.5" text-anchor="middle" font-size="13.33" fill="#262626">0.1</text><line x1="451" y1="535.5" x2="457" y2="535.5" stroke="#262626"/><line x1="1118" y1="535.5" x2="1112" y2="535.5" stroke="#262626"/><text x="444.5" y="542.0" text-anchor="end" font-size="13.33" fill="#262626">1000</text><line x1="451" y1="590.5" x2="457" y2="590.5" stroke="#262626"/><line x1="1118" y1="590.5" x2="1112" y2="590.5" stroke="#262626"/><text x="444.5" y="597.0" text-anchor="end" font-size="13.33" fill="#262626">500</text><line x1="451" y1="646.5" x2="457" y2="646.5" stroke="#262626"/><line x1="1118" y1="646.5" x2="1112" y2="646.5" stroke="#262626"/><text x="444.5" y="653.0" text-anchor="end" font-size="13.33" fill="#262626">0</text><line x1="451" y1="702.5" x2="457" y2="702.5" stroke="#262626"/><line x1="1118" y1="702.5" x2="1112" y2="702.5" stroke="#262626"/><text x="444.5" y="709.0" text-anchor="end" font-size="13.33" fill="#262626">-500</text><line x1="451" y1="758.5" x2="457" y2="758.5" stroke="#262626"/><line x1="1118" y1="758.5" x2="1112" y2="758.5" stroke="#262626"/><text x="444.5" y="765.0" text-anchor="end" font-size="13.33" fill="#262626">-1000</text><text x="785" y="797.8" text-anchor="middle" font-size="14.67" fill="#262626">time (sec)</text><text x="402" y="647.0" text-anchor="middle" font-size="14.67" fill="#262626" transform="rotate(-90 402 647.0)" textLength="49.5" lengthAdjust="spacingAndGlyphs">Δ x/Δ t</text><g stroke="#6e6e6e" fill="none" stroke-width="1">
<rect x="1001.5" y="525.5" width="12" height="4" stroke="#8a8a8a"/>
<path d="M1004.5 527.5 C1004.5 522.5 1007 520.5 1010 520.5 V518 L1013.5 521.5 L1010 524.5 V522.5 C1008 522.5 1006.5 524 1006.5 527.5 Z" fill="#f0f0f0" stroke="#7a7a7a"/>
<path d="M1014 530.5 L1017 527.5 V530.5 Z" fill="#6e6e6e"/>
<rect x="1029.5" y="516.5" width="4" height="6"/>
<rect x="1027.5" y="522.5" width="8" height="4.5"/>
<path d="M1028 524.5 H1035" />
<path d="M1027.5 527 C1027 529.5 1025 531 1022.5 531.5 H1035.5 V527" />
<path d="M1024 531 L1035 529.5 V531.5 H1023 Z" fill="#6e6e6e" stroke="none"/>
<path d="M1046 531.5 L1041.5 525 C1041 523.8 1042.5 522.8 1043.5 523.8 L1045 525.5 V519.5 C1045 517.6 1047.5 517.6 1047.5 519.5 V524 V518 C1047.5 515.8 1050.5 515.8 1050.5 518 V524 V518.8 C1050.5 516.8 1053.3 516.8 1053.3 518.8 V524 V520.8 C1053.3 518.8 1056.3 518.8 1056.3 520.8 V526 C1056.3 529 1055 531.5 1053.5 531.5 Z" stroke-linejoin="round"/>
<circle cx="1067.5" cy="522.5" r="5.5"/><path d="M1065 522.5 H1070 M1067.5 520 V525 M1071.5 526.5 L1076 531"/>
<circle cx="1087.5" cy="522.5" r="5.5"/><path d="M1085 522.5 H1090 M1091.5 526.5 L1096 531"/>
<path d="M1101.5 524.5 L1109 517 L1116.5 524.5 M1103.5 522.5 V531.5 H1114.5 V522.5 M1107.5 531.5 V526.5 H1110.5 V531.5 M1113.5 517.5 V520"/>
</g></svg>
</body></html>
